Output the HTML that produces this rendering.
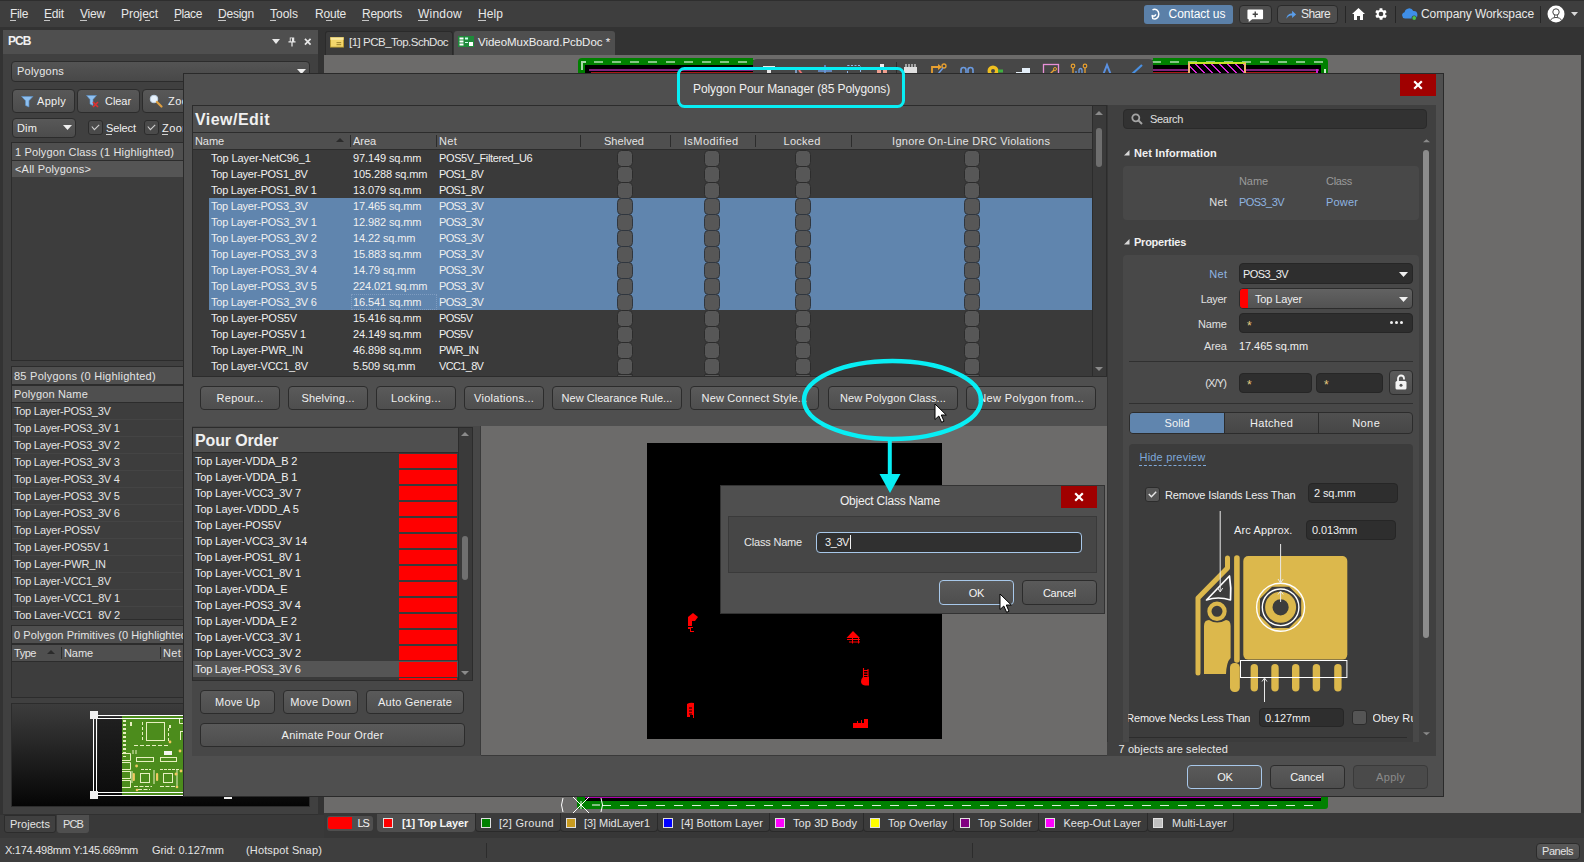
<!DOCTYPE html>
<html><head><meta charset="utf-8"><title>Polygon Pour Manager</title>
<style>
html,body{margin:0;padding:0;}
body{width:1584px;height:862px;overflow:hidden;background:#3e3e3e;font-family:"Liberation Sans",sans-serif;position:relative;}
.a{position:absolute;}
.t{white-space:pre;}
svg{position:absolute;overflow:visible;}
</style></head><body>
<div class="a" style="left:0px;top:0px;width:1584px;height:27px;background:#3e3e3e;"></div>
<div class="a" style="left:0px;top:0px;width:1584px;height:1px;background:#2e2e2e;"></div>
<div class="a" style="left:0px;top:27px;width:1584px;height:28px;background:#333333;"></div>
<div class="a" style="left:0px;top:55px;width:1584px;height:760px;background:#333333;"></div>
<div class="a t" style="left:10.0px;top:6.0px;font-size:12px;line-height:16px;color:#e8e8e8;letter-spacing:-0.34px;">File</div>
<div class="a t" style="left:44.0px;top:6.0px;font-size:12px;line-height:16px;color:#e8e8e8;letter-spacing:-0.17px;">Edit</div>
<div class="a t" style="left:80.0px;top:6.0px;font-size:12px;line-height:16px;color:#e8e8e8;letter-spacing:-0.20px;">View</div>
<div class="a t" style="left:121.0px;top:6.0px;font-size:12px;line-height:16px;color:#e8e8e8;letter-spacing:-0.05px;">Project</div>
<div class="a t" style="left:174.0px;top:6.0px;font-size:12px;line-height:16px;color:#e8e8e8;letter-spacing:-0.41px;">Place</div>
<div class="a t" style="left:218.0px;top:6.0px;font-size:12px;line-height:16px;color:#e8e8e8;letter-spacing:-0.23px;">Design</div>
<div class="a t" style="left:270.0px;top:6.0px;font-size:12px;line-height:16px;color:#e8e8e8;letter-spacing:-0.00px;">Tools</div>
<div class="a t" style="left:315.0px;top:6.0px;font-size:12px;line-height:16px;color:#e8e8e8;letter-spacing:-0.21px;">Route</div>
<div class="a t" style="left:362.0px;top:6.0px;font-size:12px;line-height:16px;color:#e8e8e8;letter-spacing:-0.29px;">Reports</div>
<div class="a t" style="left:418.0px;top:6.0px;font-size:12px;line-height:16px;color:#e8e8e8;letter-spacing:0.22px;">Window</div>
<div class="a t" style="left:478.0px;top:6.0px;font-size:12px;line-height:16px;color:#e8e8e8;letter-spacing:0.08px;">Help</div>
<div class="a" style="left:10px;top:20px;width:6px;height:1px;background:#c4c4c4;"></div>
<div class="a" style="left:44px;top:20px;width:6px;height:1px;background:#c4c4c4;"></div>
<div class="a" style="left:80px;top:20px;width:7px;height:1px;background:#c4c4c4;"></div>
<div class="a" style="left:145px;top:20px;width:5px;height:1px;background:#c4c4c4;"></div>
<div class="a" style="left:174px;top:20px;width:6px;height:1px;background:#c4c4c4;"></div>
<div class="a" style="left:218px;top:20px;width:8px;height:1px;background:#c4c4c4;"></div>
<div class="a" style="left:270px;top:20px;width:6px;height:1px;background:#c4c4c4;"></div>
<div class="a" style="left:326px;top:20px;width:6px;height:1px;background:#c4c4c4;"></div>
<div class="a" style="left:362px;top:20px;width:7px;height:1px;background:#c4c4c4;"></div>
<div class="a" style="left:418px;top:20px;width:10px;height:1px;background:#c4c4c4;"></div>
<div class="a" style="left:478px;top:20px;width:8px;height:1px;background:#c4c4c4;"></div>
<div class="a" style="left:1144px;top:5px;width:89px;height:19px;background:#5b80a8;border-radius:3px;"></div>
<svg style="left:1151px;top:8px" width="9" height="12" viewBox="0 0 9 12"><path d="M1.500 1.800 C4.500 0.200 7.800 2.200 7.800 6 C7.800 9.800 4.800 11.800 1.800 10.600 L1.200 7.600 C2.600 8.600 4.600 8 4.600 6.200" fill="none" stroke="#fff" stroke-width="1.500" stroke-linejoin="round"/></svg>
<div class="a t" style="left:1168.5px;top:6.0px;font-size:12px;line-height:16px;color:#fff;letter-spacing:-0.04px;">Contact us</div>
<div class="a" style="left:1238.5px;top:5px;width:33px;height:19px;background:#4e4e4e;border:1px solid #2a2a2a;box-sizing:border-box;border-radius:4px;"></div>
<svg style="left:1247px;top:8.500px" width="16.500" height="13.500" viewBox="0 0 19 14" preserveAspectRatio="none"><path d="M1.5 0.5 H17.5 Q18.5 0.5 18.5 1.5 V9.5 Q18.5 10.5 17.5 10.5 H6 L2 13.5 V10.5 H1.5 Q0.5 10.5 0.5 9.5 V1.5 Q0.5 0.5 1.5 0.5 Z" fill="#fff"/><path d="M9.5 2.5 V8.5 M6.5 5.5 H12.5" stroke="#444" stroke-width="1.6"/></svg>
<div class="a" style="left:1277px;top:5px;width:61px;height:19px;background:#4e4e4e;border:1px solid #2a2a2a;box-sizing:border-box;border-radius:4px;"></div>
<svg style="left:1285.500px;top:9.500px" width="10.500" height="9.500" viewBox="0 0 12 11" preserveAspectRatio="none"><path d="M0.5 10 C1 5.5 4 4 7 4 V1 L11.5 5.2 L7 9.2 V6.4 C4.5 6.4 2.5 7 0.5 10 Z" fill="#5a9eea"/></svg>
<div class="a t" style="left:1301.0px;top:6.0px;font-size:12px;line-height:16px;color:#e8e8e8;letter-spacing:-0.61px;">Share</div>
<div class="a" style="left:1345px;top:6px;width:1px;height:17px;background:#262626;"></div>
<svg style="left:1352px;top:8px" width="13" height="12" viewBox="0 0 13 12"><path d="M6.5 0 L13 6 H11 V12 H8 V8 H5 V12 H2 V6 H0 Z" fill="#fff"/></svg>
<svg style="left:1373px;top:6px" width="16" height="16" viewBox="0 0 24 24"><path fill="#fff" d="M19.4 13a7.5 7.5 0 0 0 0-2l2.1-1.6-2-3.5-2.5 1a7.5 7.5 0 0 0-1.7-1L15 3.3h-4l-.4 2.6a7.5 7.5 0 0 0-1.7 1l-2.5-1-2 3.5L6.600 11a7.500 7.500 0 0 0 0 2l-2.100 1.600 2 3.500 2.500-1a7.500 7.500 0 0 0 1.700 1l.4 2.600h4l.4-2.600a7.500 7.500 0 0 0 1.700-1l2.500 1 2-3.500L19.400 13zM13 15.500a3.500 3.500 0 1 1 0-7 3.500 3.500 0 0 1 0 7z" transform="translate(-1,0)"/></svg>
<div class="a" style="left:1395px;top:6px;width:1px;height:17px;background:#262626;"></div>
<svg style="left:1401px;top:7px" width="17" height="14" viewBox="0 0 17 14"><path d="M4 11.5 A3.2 3.2 0 0 1 3.6 5.2 A4.6 4.6 0 0 1 12.3 4 A3.6 3.6 0 0 1 13 11.5 Z" fill="#3f8fe8"/><circle cx="13.2" cy="11" r="2.6" fill="#3e3e3e"/><circle cx="13.2" cy="11" r="1.9" fill="#4cc04c"/></svg>
<div class="a t" style="left:1421.0px;top:6.0px;font-size:12px;line-height:16px;color:#e8e8e8;letter-spacing:-0.09px;">Company Workspace</div>
<div class="a" style="left:1540px;top:6px;width:1px;height:17px;background:#262626;"></div>
<svg style="left:1547px;top:5px" width="18" height="18" viewBox="0 0 18 18"><circle cx="9" cy="9" r="8.5" fill="#fff"/><circle cx="9" cy="7" r="3.2" fill="none" stroke="#444" stroke-width="1"/><path d="M3.5 15.5 C4.5 11.5 13.5 11.5 14.5 15.5" fill="none" stroke="#444" stroke-width="1"/><path d="M7.5 10 V12.5 M10.5 10 V12.5" stroke="#444" stroke-width=".8"/></svg>
<svg style="left:1571px;top:12px" width="7" height="4" viewBox="0 0 7 4"><path d="M0 0 H7 L3.5 4 Z" fill="#d8d8d8"/></svg>
<div class="a" style="left:325px;top:30.5px;width:128px;height:24px;background:#3b3b3b;border-radius:3px 3px 0 0;border:1px solid #2a2a2a;border-bottom:none;box-sizing:border-box;"></div>
<svg style="left:329.500px;top:36.500px" width="14" height="10.500" viewBox="0 0 15 13" preserveAspectRatio="none"><rect x="0.5" y="0.5" width="14" height="12" fill="#f3d66b" stroke="#b89a30"/><rect x="0.5" y="0.5" width="14" height="3" fill="#fbe9a0"/><path d="M7 7 H12 M7 9.500 H12" stroke="#8a7320" stroke-width="1"/></svg>
<div class="a t" style="left:349.0px;top:34.0px;font-size:11.5px;line-height:16px;color:#e4e4e4;letter-spacing:-0.50px;">[1] PCB_Top.SchDoc</div>
<div class="a" style="left:454px;top:30.5px;width:161px;height:24.5px;background:#4f4f4f;border-radius:3px 3px 0 0;"></div>
<svg style="left:458px;top:36px" width="16" height="11" viewBox="0 0 16 11"><rect width="16" height="11" fill="#1f8a3a"/><rect x="1.500" y="1.500" width="4" height="2" fill="#fff"/><rect x="1.500" y="4.500" width="4" height="2" fill="#fff"/><rect x="1.500" y="7.500" width="4" height="2" fill="#fff"/><rect x="7" y="1.500" width="3" height="2" fill="#cfe"/><rect x="11" y="6" width="4" height="4" fill="#fff"/><rect x="7" y="6" width="3" height="1" fill="#cfe"/></svg>
<div class="a t" style="left:478.0px;top:34.0px;font-size:11.5px;line-height:16px;color:#f0f0f0;letter-spacing:-0.03px;">VideoMuxBoard.PcbDoc *</div>
<div class="a" style="left:324px;top:54.5px;width:1257px;height:758.5px;background:#6c6b6a;"></div>
<div class="a" style="left:578px;top:58px;width:750px;height:20px;background:#008000;border-radius:4px;"></div>
<div class="a" style="left:585px;top:65px;width:736px;height:13px;background:#000;"></div>
<div class="a" style="left:594px;top:61px;width:9px;height:2px;background:#84c684;"></div>
<div class="a" style="left:612px;top:61px;width:9px;height:2px;background:#84c684;"></div>
<div class="a" style="left:630px;top:61px;width:9px;height:2px;background:#84c684;"></div>
<div class="a" style="left:648px;top:61px;width:9px;height:2px;background:#84c684;"></div>
<div class="a" style="left:666px;top:61px;width:9px;height:2px;background:#84c684;"></div>
<div class="a" style="left:684px;top:61px;width:9px;height:2px;background:#84c684;"></div>
<div class="a" style="left:702px;top:61px;width:9px;height:2px;background:#84c684;"></div>
<div class="a" style="left:720px;top:61px;width:9px;height:2px;background:#84c684;"></div>
<div class="a" style="left:738px;top:61px;width:9px;height:2px;background:#84c684;"></div>
<div class="a" style="left:756px;top:61px;width:9px;height:2px;background:#84c684;"></div>
<div class="a" style="left:774px;top:61px;width:9px;height:2px;background:#84c684;"></div>
<div class="a" style="left:792px;top:61px;width:9px;height:2px;background:#84c684;"></div>
<div class="a" style="left:810px;top:61px;width:9px;height:2px;background:#84c684;"></div>
<div class="a" style="left:828px;top:61px;width:9px;height:2px;background:#84c684;"></div>
<div class="a" style="left:846px;top:61px;width:9px;height:2px;background:#84c684;"></div>
<div class="a" style="left:864px;top:61px;width:9px;height:2px;background:#84c684;"></div>
<div class="a" style="left:882px;top:61px;width:9px;height:2px;background:#84c684;"></div>
<div class="a" style="left:900px;top:61px;width:9px;height:2px;background:#84c684;"></div>
<div class="a" style="left:918px;top:61px;width:9px;height:2px;background:#84c684;"></div>
<div class="a" style="left:936px;top:61px;width:9px;height:2px;background:#84c684;"></div>
<div class="a" style="left:954px;top:61px;width:9px;height:2px;background:#84c684;"></div>
<div class="a" style="left:972px;top:61px;width:9px;height:2px;background:#84c684;"></div>
<div class="a" style="left:990px;top:61px;width:9px;height:2px;background:#84c684;"></div>
<div class="a" style="left:1008px;top:61px;width:9px;height:2px;background:#84c684;"></div>
<div class="a" style="left:1026px;top:61px;width:9px;height:2px;background:#84c684;"></div>
<div class="a" style="left:1044px;top:61px;width:9px;height:2px;background:#84c684;"></div>
<div class="a" style="left:1062px;top:61px;width:9px;height:2px;background:#84c684;"></div>
<div class="a" style="left:1080px;top:61px;width:9px;height:2px;background:#84c684;"></div>
<div class="a" style="left:1098px;top:61px;width:9px;height:2px;background:#84c684;"></div>
<div class="a" style="left:1116px;top:61px;width:9px;height:2px;background:#84c684;"></div>
<div class="a" style="left:1134px;top:61px;width:9px;height:2px;background:#84c684;"></div>
<div class="a" style="left:1152px;top:61px;width:9px;height:2px;background:#84c684;"></div>
<div class="a" style="left:1170px;top:61px;width:9px;height:2px;background:#84c684;"></div>
<div class="a" style="left:1188px;top:61px;width:9px;height:2px;background:#84c684;"></div>
<div class="a" style="left:1206px;top:61px;width:9px;height:2px;background:#84c684;"></div>
<div class="a" style="left:1224px;top:61px;width:9px;height:2px;background:#84c684;"></div>
<div class="a" style="left:1242px;top:61px;width:9px;height:2px;background:#84c684;"></div>
<div class="a" style="left:1260px;top:61px;width:9px;height:2px;background:#84c684;"></div>
<div class="a" style="left:1278px;top:61px;width:9px;height:2px;background:#84c684;"></div>
<div class="a" style="left:1296px;top:61px;width:9px;height:2px;background:#84c684;"></div>
<div class="a" style="left:1314px;top:61px;width:9px;height:2px;background:#84c684;"></div>
<div class="a" style="left:589px;top:69px;width:730px;height:2px;background:#80207e;"></div>
<div class="a" style="left:591px;top:71.5px;width:727px;height:1.5px;background:#a81818;"></div>
<div class="a" style="left:1188px;top:62px;width:58px;height:12px;border-top:2px solid #c8e428;border-left:2px solid #f0b070;border-right:2px solid #f0b070;box-sizing:border-box;background:repeating-linear-gradient(45deg,#000 0 4.66px,#d828d8 4.66px 5.66px);"></div>
<div class="a" style="left:581px;top:61px;width:1.5px;height:9px;background:#a8d8a8;"></div>
<div class="a" style="left:581px;top:61px;width:4.5px;height:1.5px;background:#a8d8a8;"></div>
<div class="a" style="left:1324px;top:69px;width:1.5px;height:5px;background:#c8f0c8;"></div>
<div class="a" style="left:1316px;top:69px;width:1.5px;height:4px;background:#d020d0;"></div>
<div class="a" style="left:752.5px;top:57px;width:400px;height:3px;background:#6c6b6a;"></div>
<div class="a" style="left:752.5px;top:59.3px;width:400px;height:20px;background:#474747;border-radius:4px;"></div>
<div class="a" style="left:577px;top:790px;width:751px;height:19px;background:#008000;border-radius:3px;"></div>
<div class="a" style="left:585px;top:790px;width:736px;height:11px;background:#000;"></div>
<div class="a" style="left:585px;top:797px;width:736px;height:1px;background:#b000b0;"></div>
<div class="a" style="left:602px;top:805px;width:9px;height:1px;background:#d8f0d8;"></div>
<div class="a" style="left:620px;top:805px;width:9px;height:1px;background:#d8f0d8;"></div>
<div class="a" style="left:638px;top:805px;width:9px;height:1px;background:#d8f0d8;"></div>
<div class="a" style="left:656px;top:805px;width:9px;height:1px;background:#d8f0d8;"></div>
<div class="a" style="left:674px;top:805px;width:9px;height:1px;background:#d8f0d8;"></div>
<div class="a" style="left:692px;top:805px;width:9px;height:1px;background:#d8f0d8;"></div>
<div class="a" style="left:710px;top:805px;width:9px;height:1px;background:#d8f0d8;"></div>
<div class="a" style="left:728px;top:805px;width:9px;height:1px;background:#d8f0d8;"></div>
<div class="a" style="left:746px;top:805px;width:9px;height:1px;background:#d8f0d8;"></div>
<div class="a" style="left:764px;top:805px;width:9px;height:1px;background:#d8f0d8;"></div>
<div class="a" style="left:782px;top:805px;width:9px;height:1px;background:#d8f0d8;"></div>
<div class="a" style="left:800px;top:805px;width:9px;height:1px;background:#d8f0d8;"></div>
<div class="a" style="left:818px;top:805px;width:9px;height:1px;background:#d8f0d8;"></div>
<div class="a" style="left:836px;top:805px;width:9px;height:1px;background:#d8f0d8;"></div>
<div class="a" style="left:854px;top:805px;width:9px;height:1px;background:#d8f0d8;"></div>
<div class="a" style="left:872px;top:805px;width:9px;height:1px;background:#d8f0d8;"></div>
<div class="a" style="left:890px;top:805px;width:9px;height:1px;background:#d8f0d8;"></div>
<div class="a" style="left:908px;top:805px;width:9px;height:1px;background:#d8f0d8;"></div>
<div class="a" style="left:926px;top:805px;width:9px;height:1px;background:#d8f0d8;"></div>
<div class="a" style="left:944px;top:805px;width:9px;height:1px;background:#d8f0d8;"></div>
<div class="a" style="left:962px;top:805px;width:9px;height:1px;background:#d8f0d8;"></div>
<div class="a" style="left:980px;top:805px;width:9px;height:1px;background:#d8f0d8;"></div>
<div class="a" style="left:998px;top:805px;width:9px;height:1px;background:#d8f0d8;"></div>
<div class="a" style="left:1016px;top:805px;width:9px;height:1px;background:#d8f0d8;"></div>
<div class="a" style="left:1034px;top:805px;width:9px;height:1px;background:#d8f0d8;"></div>
<div class="a" style="left:1052px;top:805px;width:9px;height:1px;background:#d8f0d8;"></div>
<div class="a" style="left:1070px;top:805px;width:9px;height:1px;background:#d8f0d8;"></div>
<div class="a" style="left:1088px;top:805px;width:9px;height:1px;background:#d8f0d8;"></div>
<div class="a" style="left:1106px;top:805px;width:9px;height:1px;background:#d8f0d8;"></div>
<div class="a" style="left:1124px;top:805px;width:9px;height:1px;background:#d8f0d8;"></div>
<div class="a" style="left:1142px;top:805px;width:9px;height:1px;background:#d8f0d8;"></div>
<div class="a" style="left:1160px;top:805px;width:9px;height:1px;background:#d8f0d8;"></div>
<div class="a" style="left:1178px;top:805px;width:9px;height:1px;background:#d8f0d8;"></div>
<div class="a" style="left:1196px;top:805px;width:9px;height:1px;background:#d8f0d8;"></div>
<div class="a" style="left:1214px;top:805px;width:9px;height:1px;background:#d8f0d8;"></div>
<div class="a" style="left:1232px;top:805px;width:9px;height:1px;background:#d8f0d8;"></div>
<div class="a" style="left:1250px;top:805px;width:9px;height:1px;background:#d8f0d8;"></div>
<div class="a" style="left:1268px;top:805px;width:9px;height:1px;background:#d8f0d8;"></div>
<div class="a" style="left:1286px;top:805px;width:9px;height:1px;background:#d8f0d8;"></div>
<div class="a" style="left:1304px;top:805px;width:9px;height:1px;background:#d8f0d8;"></div>
<div class="a" style="left:324px;top:813px;width:1260px;height:25px;background:#373737;"></div>
<div class="a" style="left:0px;top:838px;width:1584px;height:24px;background:#3e3e3e;"></div>
<svg style="left:760px;top:61px" width="18" height="14" viewBox="0 0 18 14"><path d="M3 5 H15 V7 H11 V14 H7 V7 H3 Z" fill="#e8e8e8"/></svg>
<svg style="left:788px;top:61px" width="18" height="14" viewBox="0 0 18 14"><path d="M8 6 V14" stroke="#8fb8e8" stroke-width="1.500"/><path d="M11 9 L14 13" stroke="#e87070" stroke-width="2"/></svg>
<svg style="left:816px;top:61px" width="18" height="14" viewBox="0 0 18 14"><path d="M2 10 H16 M9 4 V14" stroke="#6a9ae0" stroke-width="1.500"/></svg>
<svg style="left:845px;top:61px" width="18" height="14" viewBox="0 0 18 14"><rect x="2.500" y="4.500" width="13" height="10" fill="none" stroke="#8fb8e8" stroke-dasharray="2 1.500"/></svg>
<svg style="left:873px;top:61px" width="18" height="14" viewBox="0 0 18 14"><rect x="4" y="6" width="4" height="8" fill="#f0a090"/><rect x="10" y="6" width="4" height="8" fill="#f0a090"/><rect x="7" y="3" width="4" height="5" fill="#eee"/></svg>
<div class="a" style="left:896px;top:62px;width:1px;height:12px;background:#2c2c2c;"></div>
<svg style="left:901px;top:61px" width="18" height="14" viewBox="0 0 18 14"><rect x="3" y="6" width="13" height="8" fill="#e0e0e0"/><path d="M5 3 V6 M8 3 V6 M11 3 V6 M14 3 V6" stroke="#e0e0e0" stroke-width="1.200"/></svg>
<svg style="left:929px;top:61px" width="18" height="14" viewBox="0 0 18 14"><path d="M3 14 V6 H11" fill="none" stroke="#e8a030" stroke-width="1.800"/><path d="M9 3 L13 6 L9 9 Z" fill="#e8a030"/><circle cx="15" cy="5" r="2" fill="none" stroke="#e8a030" stroke-width="1.300"/><path d="M9 13 L14 7" stroke="#6a9ae0" stroke-width="1.500"/></svg>
<svg style="left:958px;top:61px" width="18" height="14" viewBox="0 0 18 14"><path d="M3 14 V9 A2.500 2.500 0 0 1 8 9 V14 M10 14 V9 A2.500 2.500 0 0 1 15 9 V14" fill="none" stroke="#6a9ae0" stroke-width="1.600"/></svg>
<svg style="left:985px;top:61px" width="18" height="14" viewBox="0 0 18 14"><circle cx="8" cy="10" r="5.500" fill="#f0c020"/><circle cx="8" cy="10" r="2" fill="#474747"/><rect x="13" y="8.500" width="5" height="3" fill="#40b040"/></svg>
<svg style="left:1014px;top:61px" width="18" height="14" viewBox="0 0 18 14"><path d="M2 14 V11 H8 V7 H16 V14 Z" fill="#e4eef8"/></svg>
<svg style="left:1042px;top:61px" width="18" height="14" viewBox="0 0 18 14"><rect x="1.500" y="3.500" width="15" height="12" fill="none" stroke="#e890d8" stroke-width="1.300"/><path d="M8 13 L12 9" stroke="#e8a030" stroke-width="1.500"/><circle cx="13" cy="8" r="1.500" fill="none" stroke="#e8a030"/></svg>
<svg style="left:1070px;top:61px" width="18" height="14" viewBox="0 0 18 14"><circle cx="3" cy="5" r="1.800" fill="none" stroke="#e8a030" stroke-width="1.200"/><circle cx="15" cy="5" r="1.800" fill="none" stroke="#e8a030" stroke-width="1.200"/><path d="M3 7 V14 M15 7 V14" stroke="#e8a030" stroke-width="1.300"/><path d="M6 14 V10 M9 14 V9 A1.500 1.500 0 0 1 12 9 V14" fill="none" stroke="#6a9ae0" stroke-width="1.300"/></svg>
<svg style="left:1098px;top:61px" width="18" height="14" viewBox="0 0 18 14"><path d="M5 14 L9 4 L13 14" fill="none" stroke="#5a90e0" stroke-width="2"/></svg>
<svg style="left:1127px;top:61px" width="18" height="14" viewBox="0 0 18 14"><path d="M4 14 L15 4" stroke="#4a90e2" stroke-width="2.200"/></svg>
<div class="a" style="left:3px;top:30px;width:315px;height:24px;background:#4f4f4f;"></div>
<div class="a" style="left:3px;top:54px;width:315px;height:784px;background:#404040;"></div>
<div class="a t" style="left:8.0px;top:33.0px;font-size:12px;line-height:16px;color:#f0f0f0;letter-spacing:-1.00px;font-weight:bold;">PCB</div>
<svg style="left:272px;top:39px" width="8" height="5" viewBox="0 0 8 5"><path d="M0 0 H8 L4 5 Z" fill="#e8e8e8"/></svg>
<svg style="left:287.500px;top:37px" width="8" height="9.500" viewBox="0 0 9 11" preserveAspectRatio="none"><path d="M2 0.500 H7 V5 H8.500 V6.500 H5.200 V11 H3.800 V6.500 H0.500 V5 H2 Z" fill="#e8e8e8"/><rect x="3" y="1.500" width="1.500" height="3.500" fill="#4f4f4f"/></svg>
<svg style="left:304px;top:38px" width="7.500" height="7.500" viewBox="0 0 8 8"><path d="M1 1 L7 7 M7 1 L1 7" stroke="#e8e8e8" stroke-width="1.800"/></svg>
<div class="a" style="left:11px;top:61px;width:299px;height:21px;border:1px solid #2c2c2c;box-sizing:border-box;border-radius:4px;background:linear-gradient(#545454,#484848);"></div>
<div class="a t" style="left:17.0px;top:63.0px;font-size:11px;line-height:16px;color:#e8e8e8;letter-spacing:0.22px;">Polygons</div>
<svg style="left:297px;top:69px" width="9" height="5" viewBox="0 0 9 5"><path d="M0 0 H9 L4.500 5 Z" fill="#f0f0f0"/></svg>
<div class="a" style="left:11.5px;top:89px;width:63px;height:24px;border:1px solid #2c2c2c;box-sizing:border-box;border-radius:4px;background:linear-gradient(#585858,#4c4c4c);"></div>
<div class="a" style="left:76.5px;top:89px;width:63px;height:24px;border:1px solid #2c2c2c;box-sizing:border-box;border-radius:4px;background:linear-gradient(#585858,#4c4c4c);"></div>
<div class="a" style="left:141.5px;top:89px;width:63px;height:24px;border:1px solid #2c2c2c;box-sizing:border-box;border-radius:4px;background:linear-gradient(#585858,#4c4c4c);"></div>
<svg style="left:21px;top:95.500px" width="12.500" height="11.500" viewBox="0 0 11 11" preserveAspectRatio="none"><path d="M0.500 0.500 H10.500 L7 4.500 V10.500 L4 9 V4.500 Z" fill="#8ec0f0" stroke="#5a90c8" stroke-width=".6"/></svg>
<div class="a t" style="left:37.0px;top:93.0px;font-size:11px;line-height:16px;color:#f0f0f0;letter-spacing:0.29px;">Apply</div>
<svg style="left:86px;top:95px" width="14" height="13" viewBox="0 0 14 13"><path d="M0.500 0.500 H10.500 L7 4.500 V10.500 L4 9 V4.500 Z" fill="#8ec0f0" stroke="#5a90c8" stroke-width=".6"/><path d="M7 7 L12 12 M12 7 L7 12" stroke="#e03030" stroke-width="1.600"/></svg>
<div class="a t" style="left:105.0px;top:93.0px;font-size:11px;line-height:16px;color:#f0f0f0;letter-spacing:-0.06px;">Clear</div>
<svg style="left:149px;top:94px" width="14" height="14" viewBox="0 0 14 14"><circle cx="5" cy="5" r="3.800" fill="#e8f2fc" stroke="#bcd0e4" stroke-width="1"/><path d="M8 8 L12.500 12.500" stroke="#e0a040" stroke-width="2.200" stroke-linecap="round"/></svg>
<div class="a t" style="left:168.0px;top:93.0px;font-size:11px;line-height:16px;color:#f0f0f0;letter-spacing:0.47px;">Zoom</div>
<div class="a" style="left:11.5px;top:117.5px;width:64px;height:20px;border:1px solid #2c2c2c;box-sizing:border-box;border-radius:4px;background:linear-gradient(#585858,#4c4c4c);"></div>
<div class="a t" style="left:17.0px;top:120.0px;font-size:11px;line-height:16px;color:#f0f0f0;letter-spacing:0.15px;">Dim</div>
<svg style="left:63px;top:125px" width="9" height="5" viewBox="0 0 9 5"><path d="M0 0 H9 L4.500 5 Z" fill="#f0f0f0"/></svg>
<div class="a" style="left:87.5px;top:119.5px;width:15px;height:15px;background:#4a4a4a;border:1px solid #2c2c2c;box-sizing:border-box;border-radius:3px;"></div>
<svg style="left:91.0px;top:123.5px" width="9" height="7" viewBox="0 0 9 7"><path d="M0.800 2.500 L3.400 5.600 L8.200 0.800" fill="none" stroke="#d0d0d0" stroke-width="1.100"/></svg>
<div class="a t" style="left:106.0px;top:120.0px;font-size:11px;line-height:16px;color:#f0f0f0;letter-spacing:-0.10px;">Select</div>
<div class="a" style="left:106px;top:134px;width:6px;height:1px;background:#d0d0d0;"></div>
<div class="a" style="left:143.5px;top:119.5px;width:15px;height:15px;background:#4a4a4a;border:1px solid #2c2c2c;box-sizing:border-box;border-radius:3px;"></div>
<svg style="left:147.0px;top:123.5px" width="9" height="7" viewBox="0 0 9 7"><path d="M0.800 2.500 L3.400 5.600 L8.200 0.800" fill="none" stroke="#d0d0d0" stroke-width="1.100"/></svg>
<div class="a t" style="left:162.0px;top:120.0px;font-size:11px;line-height:16px;color:#f0f0f0;letter-spacing:0.47px;">Zoom</div>
<div class="a" style="left:162px;top:134px;width:6px;height:1px;background:#d0d0d0;"></div>
<div class="a" style="left:11px;top:142px;width:300px;height:219px;background:#3d3d3d;border:1px solid #2c2c2c;box-sizing:border-box;"></div>
<div class="a" style="left:12px;top:143px;width:298px;height:17px;background:#4f4f4f;"></div>
<div class="a" style="left:12px;top:160px;width:298px;height:1px;background:#2c2c2c;"></div>
<div class="a t" style="left:15.0px;top:144.0px;font-size:11px;line-height:16px;color:#e4e4e4;letter-spacing:0.16px;">1 Polygon Class (1 Highlighted)</div>
<div class="a" style="left:12px;top:161px;width:298px;height:16px;background:#555555;"></div>
<div class="a t" style="left:15.0px;top:161.0px;font-size:11px;line-height:16px;color:#e4e4e4;letter-spacing:0.19px;">&lt;All Polygons&gt;</div>
<div class="a" style="left:11px;top:366px;width:300px;height:254px;background:#3d3d3d;border:1px solid #2c2c2c;box-sizing:border-box;"></div>
<div class="a" style="left:12px;top:367px;width:298px;height:17px;background:#4f4f4f;"></div>
<div class="a" style="left:12px;top:384px;width:298px;height:2px;background:#2c2c2c;"></div>
<div class="a t" style="left:14.0px;top:368.0px;font-size:11px;line-height:16px;color:#e4e4e4;letter-spacing:0.25px;">85 Polygons (0 Highlighted)</div>
<div class="a" style="left:12px;top:386px;width:298px;height:16px;background:#4f4f4f;"></div>
<div class="a" style="left:12px;top:402px;width:298px;height:1px;background:#2c2c2c;"></div>
<div class="a t" style="left:14.0px;top:386.0px;font-size:11px;line-height:16px;color:#e4e4e4;letter-spacing:0.15px;">Polygon Name</div>
<div class="a" style="left:12px;top:419px;width:298px;height:1px;background:#444444;"></div>
<div class="a t" style="left:14.0px;top:403.0px;font-size:11px;line-height:16px;color:#e4e4e4;letter-spacing:-0.25px;">Top Layer-POS3_3V</div>
<div class="a" style="left:12px;top:436px;width:298px;height:1px;background:#444444;"></div>
<div class="a t" style="left:14.0px;top:420.0px;font-size:11px;line-height:16px;color:#e4e4e4;letter-spacing:-0.23px;">Top Layer-POS3_3V 1</div>
<div class="a" style="left:12px;top:453px;width:298px;height:1px;background:#444444;"></div>
<div class="a t" style="left:14.0px;top:437.0px;font-size:11px;line-height:16px;color:#e4e4e4;letter-spacing:-0.23px;">Top Layer-POS3_3V 2</div>
<div class="a" style="left:12px;top:470px;width:298px;height:1px;background:#444444;"></div>
<div class="a t" style="left:14.0px;top:454.0px;font-size:11px;line-height:16px;color:#e4e4e4;letter-spacing:-0.23px;">Top Layer-POS3_3V 3</div>
<div class="a" style="left:12px;top:487px;width:298px;height:1px;background:#444444;"></div>
<div class="a t" style="left:14.0px;top:471.0px;font-size:11px;line-height:16px;color:#e4e4e4;letter-spacing:-0.23px;">Top Layer-POS3_3V 4</div>
<div class="a" style="left:12px;top:504px;width:298px;height:1px;background:#444444;"></div>
<div class="a t" style="left:14.0px;top:488.0px;font-size:11px;line-height:16px;color:#e4e4e4;letter-spacing:-0.23px;">Top Layer-POS3_3V 5</div>
<div class="a" style="left:12px;top:521px;width:298px;height:1px;background:#444444;"></div>
<div class="a t" style="left:14.0px;top:505.0px;font-size:11px;line-height:16px;color:#e4e4e4;letter-spacing:-0.23px;">Top Layer-POS3_3V 6</div>
<div class="a" style="left:12px;top:538px;width:298px;height:1px;background:#444444;"></div>
<div class="a t" style="left:14.0px;top:522.0px;font-size:11px;line-height:16px;color:#e4e4e4;letter-spacing:-0.18px;">Top Layer-POS5V</div>
<div class="a" style="left:12px;top:555px;width:298px;height:1px;background:#444444;"></div>
<div class="a t" style="left:14.0px;top:539.0px;font-size:11px;line-height:16px;color:#e4e4e4;letter-spacing:-0.17px;">Top Layer-POS5V 1</div>
<div class="a" style="left:12px;top:572px;width:298px;height:1px;background:#444444;"></div>
<div class="a t" style="left:14.0px;top:556.0px;font-size:11px;line-height:16px;color:#e4e4e4;letter-spacing:-0.19px;">Top Layer-PWR_IN</div>
<div class="a" style="left:12px;top:589px;width:298px;height:1px;background:#444444;"></div>
<div class="a t" style="left:14.0px;top:573.0px;font-size:11px;line-height:16px;color:#e4e4e4;letter-spacing:-0.24px;">Top Layer-VCC1_8V</div>
<div class="a" style="left:12px;top:606px;width:298px;height:1px;background:#444444;"></div>
<div class="a t" style="left:14.0px;top:590.0px;font-size:11px;line-height:16px;color:#e4e4e4;letter-spacing:-0.22px;">Top Layer-VCC1_8V 1</div>
<div class="a t" style="left:14.0px;top:607.0px;font-size:11px;line-height:16px;color:#e4e4e4;letter-spacing:-0.22px;clip-path:inset(0 0 4px 0);">Top Layer-VCC1_8V 2</div>
<div class="a" style="left:11px;top:625px;width:300px;height:73px;background:#3d3d3d;border:1px solid #2c2c2c;box-sizing:border-box;"></div>
<div class="a" style="left:12px;top:626px;width:298px;height:17px;background:#4f4f4f;"></div>
<div class="a" style="left:12px;top:643px;width:298px;height:2px;background:#2c2c2c;"></div>
<div class="a t" style="left:14.0px;top:627.0px;font-size:11px;line-height:16px;color:#e4e4e4;letter-spacing:0.07px;">0 Polygon Primitives (0 Highlighted)</div>
<div class="a" style="left:12px;top:645px;width:298px;height:16px;background:#4f4f4f;"></div>
<div class="a" style="left:12px;top:661px;width:298px;height:1px;background:#2c2c2c;"></div>
<div class="a t" style="left:14.0px;top:645.0px;font-size:11px;line-height:16px;color:#e4e4e4;letter-spacing:-0.46px;">Type</div>
<div class="a t" style="left:64.0px;top:645.0px;font-size:11px;line-height:16px;color:#e4e4e4;letter-spacing:-0.09px;">Name</div>
<div class="a t" style="left:163.0px;top:645.0px;font-size:11px;line-height:16px;color:#e4e4e4;letter-spacing:0.29px;">Net</div>
<svg style="left:47px;top:650px" width="8" height="4" viewBox="0 0 8 4"><path d="M0 4 H8 L4 0 Z" fill="#2b2b2b"/></svg>
<div class="a" style="left:61px;top:647px;width:1px;height:12px;background:#2c2c2c;"></div>
<div class="a" style="left:160px;top:647px;width:1px;height:12px;background:#2c2c2c;"></div>
<div class="a" style="left:11px;top:703px;width:299px;height:104px;border:1px solid #2c2c2c;box-sizing:border-box;background:linear-gradient(#3c3c3c,#050505);"></div>
<div class="a" style="left:98px;top:717px;width:25px;height:78px;background:linear-gradient(#202020,#0c0c0c);"></div>
<svg style="left:122px;top:716px" width="62" height="80" viewBox="122 716 62 80">
<rect x="122" y="716" width="62" height="80" fill="#4c8c1c"/>
<g fill="none" stroke="#e8f0c0" stroke-width="1">
<rect x="146.500" y="722.500" width="18" height="18"/>
<rect x="136.500" y="757.500" width="17" height="4"/><rect x="160.500" y="757.500" width="16" height="4"/>
<rect x="140.500" y="773.500" width="9" height="9"/><rect x="163.500" y="773.500" width="9" height="9"/>
<path d="M122 753.500 H130.500 V760.500 H122 M122 762.500 H130.500 V769.500 H122 M122 771.500 H130.500 V778.500 H122 M122 780.500 H130.500 V787.500 H122"/>
<path d="M134 745.500 H169" stroke-dasharray="4 2"/>
<path d="M142.500 722 V741 M168.500 728 V742" stroke-dasharray="3 2"/>
<path d="M141 769.500 H151 M160 769.500 H179" stroke-dasharray="3 1"/>
<path d="M134 786.500 H152 M160 786.500 H176 M138 789.500 H150" stroke-dasharray="4 1.500"/>
<path d="M179.500 718.500 H184 M179.500 718.500 V723.500 H184 M180.500 731 V740 M184 731.500 H180.500 M133 750 V754 M136 750 V754" />
<path d="M124.500 720 V757" stroke-width="3" stroke-dasharray="2 2"/>
<path d="M154 770 V784 M177 770 V788 M132 771 V783"/>
</g>
<rect x="164" y="751" width="8" height="4" fill="#f4f4f0"/>
<rect x="130" y="722" width="2" height="4" fill="#e8f0c0"/><rect x="169" y="725" width="2" height="3" fill="#e8f0c0"/>
<g fill="#f0c860"><circle cx="136.600" cy="766" r="1.400"/><rect x="132.700" y="773" width="2.200" height="8" rx="1"/><rect x="156" y="773" width="2.200" height="8" rx="1"/><circle cx="176" cy="774" r="1.500"/><circle cx="170" cy="742" r="1.400"/><circle cx="180" cy="751" r="1.400"/><circle cx="181" cy="771" r="1.400"/><circle cx="137" cy="790" r="1.300"/><circle cx="177" cy="787" r="1.300"/></g>
</svg>
<div class="a" style="left:93px;top:715px;width:92px;height:81px;border:1px solid #fff;box-sizing:border-box;"></div>
<div class="a" style="left:96px;top:718px;width:92px;height:75px;border:1px solid #fff;border-right:none;box-sizing:border-box;"></div>
<div class="a" style="left:90px;top:711px;width:8px;height:8px;background:#f0f0f0;"></div>
<div class="a" style="left:90px;top:791px;width:8px;height:8px;background:#f0f0f0;"></div>
<div class="a" style="left:224px;top:797px;width:8px;height:2px;background:#f0f0f0;"></div>
<div class="a" style="left:0px;top:814.5px;width:324px;height:23.5px;background:#393939;"></div>
<div class="a" style="left:3px;top:814px;width:315px;height:1px;background:#303030;"></div>
<div class="a" style="left:4px;top:815px;width:52px;height:18px;background:#404040;border:1px solid #2c2c2c;box-sizing:border-box;border-radius:0 0 3px 3px;"></div>
<div class="a t" style="left:10.0px;top:816.0px;font-size:11px;line-height:16px;color:#e4e4e4;letter-spacing:0.03px;">Projects</div>
<div class="a" style="left:57px;top:815px;width:32px;height:18px;background:#4f4f4f;border-radius:0 0 3px 3px;"></div>
<div class="a t" style="left:63.0px;top:816.0px;font-size:11px;line-height:16px;color:#e4e4e4;letter-spacing:-0.88px;">PCB</div>
<div class="a t" style="left:5.0px;top:842.0px;font-size:11px;line-height:16px;color:#e4e4e4;letter-spacing:-0.27px;">X:174.498mm Y:145.669mm</div>
<div class="a t" style="left:152.0px;top:842.0px;font-size:11px;line-height:16px;color:#e4e4e4;letter-spacing:-0.06px;">Grid: 0.127mm</div>
<div class="a t" style="left:246.0px;top:842.0px;font-size:11px;line-height:16px;color:#e4e4e4;letter-spacing:0.14px;">(Hotspot Snap)</div>
<div class="a" style="left:486px;top:843px;width:1px;height:15px;background:#2c2c2c;"></div>
<div class="a" style="left:972px;top:843px;width:1px;height:15px;background:#2c2c2c;"></div>
<div class="a" style="left:1536px;top:843px;width:44px;height:17px;border:1px solid #2c2c2c;box-sizing:border-box;border-radius:4px;background:linear-gradient(#585858,#4c4c4c);"></div>
<div class="a t" style="left:1542.0px;top:843.0px;font-size:11px;line-height:16px;color:#e4e4e4;letter-spacing:-0.44px;">Panels</div>
<div class="a" style="left:327px;top:815.5px;width:46px;height:15px;background:#4f4f4f;border-radius:3px;"></div>
<div class="a" style="left:327.5px;top:816.5px;width:24.5px;height:12.5px;background:#ff0000;border-radius:2px 0 0 2px;"></div>
<div class="a t" style="left:357.5px;top:815.0px;font-size:11px;line-height:16px;color:#f4f4f4;letter-spacing:-1.00px;">LS</div>
<div class="a" style="left:376.5px;top:813.5px;width:98px;height:18px;background:#4f4f4f;border-radius:0 0 4px 4px;"></div>
<div class="a" style="left:383px;top:818px;width:10px;height:10px;background:#ff0000;border:1px solid #e0e0e0;box-sizing:border-box;"></div>
<div class="a t" style="left:402.0px;top:815.0px;font-size:11px;line-height:16px;color:#f4f4f4;letter-spacing:-0.17px;font-weight:bold;">[1] Top Layer</div>
<div class="a" style="left:474.5px;top:813px;width:86.20000000000005px;height:18.5px;background:#3b3b3b;border:1px solid #2a2a2a;box-sizing:border-box;border-top:none;border-radius:0 0 4px 4px;"></div>
<div class="a" style="left:481px;top:818px;width:10px;height:10px;background:#008000;border:1px solid #e0e0e0;box-sizing:border-box;"></div>
<div class="a t" style="left:499.0px;top:815.0px;font-size:11px;line-height:16px;color:#e4e4e4;letter-spacing:0.30px;">[2] Ground</div>
<div class="a" style="left:559.7px;top:813px;width:97.89999999999998px;height:18.5px;background:#3b3b3b;border:1px solid #2a2a2a;box-sizing:border-box;border-top:none;border-radius:0 0 4px 4px;"></div>
<div class="a" style="left:566px;top:818px;width:10px;height:10px;background:#c89b20;border:1px solid #e0e0e0;box-sizing:border-box;"></div>
<div class="a t" style="left:584.0px;top:815.0px;font-size:11px;line-height:16px;color:#e4e4e4;letter-spacing:-0.05px;">[3] MidLayer1</div>
<div class="a" style="left:656.6px;top:813px;width:113.10000000000002px;height:18.5px;background:#3b3b3b;border:1px solid #2a2a2a;box-sizing:border-box;border-top:none;border-radius:0 0 4px 4px;"></div>
<div class="a" style="left:663px;top:818px;width:10px;height:10px;background:#0000ff;border:1px solid #e0e0e0;box-sizing:border-box;"></div>
<div class="a t" style="left:681.0px;top:815.0px;font-size:11px;line-height:16px;color:#e4e4e4;letter-spacing:0.08px;">[4] Bottom Layer</div>
<div class="a" style="left:768.7px;top:813px;width:95.29999999999995px;height:18.5px;background:#3b3b3b;border:1px solid #2a2a2a;box-sizing:border-box;border-top:none;border-radius:0 0 4px 4px;"></div>
<div class="a" style="left:775px;top:818px;width:10px;height:10px;background:#ff00ff;border:1px solid #e0e0e0;box-sizing:border-box;"></div>
<div class="a t" style="left:793.0px;top:815.0px;font-size:11px;line-height:16px;color:#e4e4e4;letter-spacing:0.09px;">Top 3D Body</div>
<div class="a" style="left:863px;top:813px;width:91px;height:18.5px;background:#3b3b3b;border:1px solid #2a2a2a;box-sizing:border-box;border-top:none;border-radius:0 0 4px 4px;"></div>
<div class="a" style="left:870px;top:818px;width:10px;height:10px;background:#ffff00;border:1px solid #e0e0e0;box-sizing:border-box;"></div>
<div class="a t" style="left:888.0px;top:815.0px;font-size:11px;line-height:16px;color:#e4e4e4;letter-spacing:0.03px;">Top Overlay</div>
<div class="a" style="left:953px;top:813px;width:86px;height:18.5px;background:#3b3b3b;border:1px solid #2a2a2a;box-sizing:border-box;border-top:none;border-radius:0 0 4px 4px;"></div>
<div class="a" style="left:960px;top:818px;width:10px;height:10px;background:#800080;border:1px solid #e0e0e0;box-sizing:border-box;"></div>
<div class="a t" style="left:978.0px;top:815.0px;font-size:11px;line-height:16px;color:#e4e4e4;letter-spacing:0.14px;">Top Solder</div>
<div class="a" style="left:1038px;top:813px;width:110px;height:18.5px;background:#3b3b3b;border:1px solid #2a2a2a;box-sizing:border-box;border-top:none;border-radius:0 0 4px 4px;"></div>
<div class="a" style="left:1045px;top:818px;width:10px;height:10px;background:#ff00ff;border:1px solid #e0e0e0;box-sizing:border-box;"></div>
<div class="a t" style="left:1063.5px;top:815.0px;font-size:11px;line-height:16px;color:#e4e4e4;letter-spacing:-0.01px;">Keep-Out Layer</div>
<div class="a" style="left:1147px;top:813px;width:87px;height:18.5px;background:#3b3b3b;border:1px solid #2a2a2a;box-sizing:border-box;border-top:none;border-radius:0 0 4px 4px;"></div>
<div class="a" style="left:1153px;top:818px;width:10px;height:10px;background:#c0c0c0;border:1px solid #e0e0e0;box-sizing:border-box;"></div>
<div class="a t" style="left:1172.0px;top:815.0px;font-size:11px;line-height:16px;color:#e4e4e4;letter-spacing:0.05px;">Multi-Layer</div>
<svg style="left:560px;top:797px" width="44" height="16" viewBox="0 0 44 16"><path d="M3 1 Q0 8 3 15 M41 1 Q44 8 41 15" fill="none" stroke="#fff" stroke-width="1"/><path d="M13 0 L29 16 M29 0 L13 16 M21 4 V12 M32 8 H40" stroke="#fff" stroke-width="1"/></svg>
<div class="a" style="left:183px;top:73px;width:1261px;height:724px;background:#4f4f4f;border:1px solid #2a2a2a;box-sizing:border-box;"></div>
<div class="a t" style="left:693.0px;top:81.0px;font-size:12px;line-height:16px;color:#f0f0f0;letter-spacing:-0.09px;">Polygon Pour Manager (85 Polygons)</div>
<div class="a" style="left:1400px;top:74px;width:36px;height:22px;background:#a00000;"></div>
<svg style="left:1413px;top:80px" width="10" height="10" viewBox="0 0 10 10"><path d="M1.200 1.200 L8.800 8.800 M8.800 1.200 L1.200 8.800" stroke="#fff" stroke-width="2.200"/></svg>
<div class="a" style="left:192px;top:105px;width:915px;height:272px;background:#3a3a3a;border:1px solid #2c2c2c;box-sizing:border-box;"></div>
<div class="a" style="left:193px;top:106px;width:899px;height:26px;background:#4f4f4f;"></div>
<div class="a t" style="left:195.0px;top:112.0px;font-size:16px;line-height:16px;color:#f0f0f0;letter-spacing:0.46px;font-weight:bold;">View/Edit</div>
<div class="a" style="left:193px;top:132px;width:900px;height:1px;background:#2c2c2c;"></div>
<div class="a" style="left:1092px;top:106px;width:1px;height:270px;background:#2c2c2c;"></div>
<div class="a" style="left:193px;top:133px;width:899px;height:16px;background:#4f4f4f;"></div>
<div class="a" style="left:193px;top:149px;width:900px;height:1px;background:#2c2c2c;"></div>
<div class="a t" style="left:195.0px;top:133.0px;font-size:11px;line-height:16px;color:#e4e4e4;letter-spacing:-0.09px;">Name</div>
<div class="a t" style="left:353.0px;top:133.0px;font-size:11px;line-height:16px;color:#e4e4e4;letter-spacing:-0.06px;">Area</div>
<div class="a t" style="left:439.0px;top:133.0px;font-size:11px;line-height:16px;color:#e4e4e4;letter-spacing:0.29px;">Net</div>
<div class="a t" style="left:604.0px;top:133.0px;font-size:11px;line-height:16px;color:#e4e4e4;letter-spacing:0.03px;">Shelved</div>
<div class="a t" style="left:683.7px;top:133.0px;font-size:11px;line-height:16px;color:#e4e4e4;letter-spacing:0.49px;">IsModified</div>
<div class="a t" style="left:783.6px;top:133.0px;font-size:11px;line-height:16px;color:#e4e4e4;letter-spacing:0.25px;">Locked</div>
<div class="a t" style="left:892.1px;top:133.0px;font-size:11px;line-height:16px;color:#e4e4e4;letter-spacing:0.25px;">Ignore On-Line DRC Violations</div>
<svg style="left:336px;top:138px" width="8" height="4" viewBox="0 0 8 4"><path d="M0 4 H8 L4 0 Z" fill="#2b2b2b"/></svg>
<div class="a" style="left:350px;top:135px;width:1px;height:12px;background:#2c2c2c;"></div>
<div class="a" style="left:436px;top:135px;width:1px;height:12px;background:#2c2c2c;"></div>
<div class="a" style="left:580px;top:135px;width:1px;height:12px;background:#2c2c2c;"></div>
<div class="a" style="left:670px;top:135px;width:1px;height:12px;background:#2c2c2c;"></div>
<div class="a" style="left:755px;top:135px;width:1px;height:12px;background:#2c2c2c;"></div>
<div class="a" style="left:851px;top:135px;width:1px;height:12px;background:#2c2c2c;"></div>
<div class="a" style="left:209px;top:198px;width:883px;height:112px;background:#6085ae;"></div>
<div class="a t" style="left:211.0px;top:150.0px;font-size:11px;line-height:16px;color:#f0f0f0;letter-spacing:-0.09px;">Top Layer-NetC96_1</div>
<div class="a t" style="left:353.0px;top:150.0px;font-size:11px;line-height:16px;color:#f0f0f0;letter-spacing:-0.11px;">97.149 sq.mm</div>
<div class="a t" style="left:439.0px;top:150.0px;font-size:11px;line-height:16px;color:#f0f0f0;letter-spacing:-0.38px;">POS5V_Filtered_U6</div>
<div class="a" style="left:617px;top:150px;width:15.5px;height:16.5px;background:#575757;border:1px solid #2c2c2c;box-sizing:border-box;border-radius:4.5px;"></div>
<div class="a" style="left:704.3px;top:150px;width:15.5px;height:16.5px;background:#575757;border:1px solid #2c2c2c;box-sizing:border-box;border-radius:4.5px;"></div>
<div class="a" style="left:795.3px;top:150px;width:15.5px;height:16.5px;background:#575757;border:1px solid #2c2c2c;box-sizing:border-box;border-radius:4.5px;"></div>
<div class="a" style="left:964.3px;top:150px;width:15.5px;height:16.5px;background:#575757;border:1px solid #2c2c2c;box-sizing:border-box;border-radius:4.5px;"></div>
<div class="a t" style="left:211.0px;top:166.0px;font-size:11px;line-height:16px;color:#f0f0f0;letter-spacing:-0.25px;">Top Layer-POS1_8V</div>
<div class="a t" style="left:353.0px;top:166.0px;font-size:11px;line-height:16px;color:#f0f0f0;letter-spacing:-0.11px;">105.288 sq.mm</div>
<div class="a t" style="left:439.0px;top:166.0px;font-size:11px;line-height:16px;color:#f0f0f0;letter-spacing:-0.68px;">POS1_8V</div>
<div class="a" style="left:617px;top:166px;width:15.5px;height:16.5px;background:#575757;border:1px solid #2c2c2c;box-sizing:border-box;border-radius:4.5px;"></div>
<div class="a" style="left:704.3px;top:166px;width:15.5px;height:16.5px;background:#575757;border:1px solid #2c2c2c;box-sizing:border-box;border-radius:4.5px;"></div>
<div class="a" style="left:795.3px;top:166px;width:15.5px;height:16.5px;background:#575757;border:1px solid #2c2c2c;box-sizing:border-box;border-radius:4.5px;"></div>
<div class="a" style="left:964.3px;top:166px;width:15.5px;height:16.5px;background:#575757;border:1px solid #2c2c2c;box-sizing:border-box;border-radius:4.5px;"></div>
<div class="a t" style="left:211.0px;top:182.0px;font-size:11px;line-height:16px;color:#f0f0f0;letter-spacing:-0.23px;">Top Layer-POS1_8V 1</div>
<div class="a t" style="left:353.0px;top:182.0px;font-size:11px;line-height:16px;color:#f0f0f0;letter-spacing:-0.11px;">13.079 sq.mm</div>
<div class="a t" style="left:439.0px;top:182.0px;font-size:11px;line-height:16px;color:#f0f0f0;letter-spacing:-0.68px;">POS1_8V</div>
<div class="a" style="left:617px;top:182px;width:15.5px;height:16.5px;background:#575757;border:1px solid #2c2c2c;box-sizing:border-box;border-radius:4.5px;"></div>
<div class="a" style="left:704.3px;top:182px;width:15.5px;height:16.5px;background:#575757;border:1px solid #2c2c2c;box-sizing:border-box;border-radius:4.5px;"></div>
<div class="a" style="left:795.3px;top:182px;width:15.5px;height:16.5px;background:#575757;border:1px solid #2c2c2c;box-sizing:border-box;border-radius:4.5px;"></div>
<div class="a" style="left:964.3px;top:182px;width:15.5px;height:16.5px;background:#575757;border:1px solid #2c2c2c;box-sizing:border-box;border-radius:4.5px;"></div>
<div class="a t" style="left:211.0px;top:198.0px;font-size:11px;line-height:16px;color:#f0f0f0;letter-spacing:-0.25px;">Top Layer-POS3_3V</div>
<div class="a t" style="left:353.0px;top:198.0px;font-size:11px;line-height:16px;color:#f0f0f0;letter-spacing:-0.11px;">17.465 sq.mm</div>
<div class="a t" style="left:439.0px;top:198.0px;font-size:11px;line-height:16px;color:#f0f0f0;letter-spacing:-0.68px;">POS3_3V</div>
<div class="a" style="left:617px;top:198px;width:15.5px;height:16.5px;background:#575757;border:1px solid #30363e;box-sizing:border-box;border-radius:4.5px;"></div>
<div class="a" style="left:704.3px;top:198px;width:15.5px;height:16.5px;background:#575757;border:1px solid #30363e;box-sizing:border-box;border-radius:4.5px;"></div>
<div class="a" style="left:795.3px;top:198px;width:15.5px;height:16.5px;background:#575757;border:1px solid #30363e;box-sizing:border-box;border-radius:4.5px;"></div>
<div class="a" style="left:964.3px;top:198px;width:15.5px;height:16.5px;background:#575757;border:1px solid #30363e;box-sizing:border-box;border-radius:4.5px;"></div>
<div class="a t" style="left:211.0px;top:214.0px;font-size:11px;line-height:16px;color:#f0f0f0;letter-spacing:-0.23px;">Top Layer-POS3_3V 1</div>
<div class="a t" style="left:353.0px;top:214.0px;font-size:11px;line-height:16px;color:#f0f0f0;letter-spacing:-0.11px;">12.982 sq.mm</div>
<div class="a t" style="left:439.0px;top:214.0px;font-size:11px;line-height:16px;color:#f0f0f0;letter-spacing:-0.68px;">POS3_3V</div>
<div class="a" style="left:617px;top:214px;width:15.5px;height:16.5px;background:#575757;border:1px solid #30363e;box-sizing:border-box;border-radius:4.5px;"></div>
<div class="a" style="left:704.3px;top:214px;width:15.5px;height:16.5px;background:#575757;border:1px solid #30363e;box-sizing:border-box;border-radius:4.5px;"></div>
<div class="a" style="left:795.3px;top:214px;width:15.5px;height:16.5px;background:#575757;border:1px solid #30363e;box-sizing:border-box;border-radius:4.5px;"></div>
<div class="a" style="left:964.3px;top:214px;width:15.5px;height:16.5px;background:#575757;border:1px solid #30363e;box-sizing:border-box;border-radius:4.5px;"></div>
<div class="a t" style="left:211.0px;top:230.0px;font-size:11px;line-height:16px;color:#f0f0f0;letter-spacing:-0.23px;">Top Layer-POS3_3V 2</div>
<div class="a t" style="left:353.0px;top:230.0px;font-size:11px;line-height:16px;color:#f0f0f0;letter-spacing:-0.11px;">14.22 sq.mm</div>
<div class="a t" style="left:439.0px;top:230.0px;font-size:11px;line-height:16px;color:#f0f0f0;letter-spacing:-0.68px;">POS3_3V</div>
<div class="a" style="left:617px;top:230px;width:15.5px;height:16.5px;background:#575757;border:1px solid #30363e;box-sizing:border-box;border-radius:4.5px;"></div>
<div class="a" style="left:704.3px;top:230px;width:15.5px;height:16.5px;background:#575757;border:1px solid #30363e;box-sizing:border-box;border-radius:4.5px;"></div>
<div class="a" style="left:795.3px;top:230px;width:15.5px;height:16.5px;background:#575757;border:1px solid #30363e;box-sizing:border-box;border-radius:4.5px;"></div>
<div class="a" style="left:964.3px;top:230px;width:15.5px;height:16.5px;background:#575757;border:1px solid #30363e;box-sizing:border-box;border-radius:4.5px;"></div>
<div class="a t" style="left:211.0px;top:246.0px;font-size:11px;line-height:16px;color:#f0f0f0;letter-spacing:-0.23px;">Top Layer-POS3_3V 3</div>
<div class="a t" style="left:353.0px;top:246.0px;font-size:11px;line-height:16px;color:#f0f0f0;letter-spacing:-0.11px;">15.883 sq.mm</div>
<div class="a t" style="left:439.0px;top:246.0px;font-size:11px;line-height:16px;color:#f0f0f0;letter-spacing:-0.68px;">POS3_3V</div>
<div class="a" style="left:617px;top:246px;width:15.5px;height:16.5px;background:#575757;border:1px solid #30363e;box-sizing:border-box;border-radius:4.5px;"></div>
<div class="a" style="left:704.3px;top:246px;width:15.5px;height:16.5px;background:#575757;border:1px solid #30363e;box-sizing:border-box;border-radius:4.5px;"></div>
<div class="a" style="left:795.3px;top:246px;width:15.5px;height:16.5px;background:#575757;border:1px solid #30363e;box-sizing:border-box;border-radius:4.5px;"></div>
<div class="a" style="left:964.3px;top:246px;width:15.5px;height:16.5px;background:#575757;border:1px solid #30363e;box-sizing:border-box;border-radius:4.5px;"></div>
<div class="a t" style="left:211.0px;top:262.0px;font-size:11px;line-height:16px;color:#f0f0f0;letter-spacing:-0.23px;">Top Layer-POS3_3V 4</div>
<div class="a t" style="left:353.0px;top:262.0px;font-size:11px;line-height:16px;color:#f0f0f0;letter-spacing:-0.11px;">14.79 sq.mm</div>
<div class="a t" style="left:439.0px;top:262.0px;font-size:11px;line-height:16px;color:#f0f0f0;letter-spacing:-0.68px;">POS3_3V</div>
<div class="a" style="left:617px;top:262px;width:15.5px;height:16.5px;background:#575757;border:1px solid #30363e;box-sizing:border-box;border-radius:4.5px;"></div>
<div class="a" style="left:704.3px;top:262px;width:15.5px;height:16.5px;background:#575757;border:1px solid #30363e;box-sizing:border-box;border-radius:4.5px;"></div>
<div class="a" style="left:795.3px;top:262px;width:15.5px;height:16.5px;background:#575757;border:1px solid #30363e;box-sizing:border-box;border-radius:4.5px;"></div>
<div class="a" style="left:964.3px;top:262px;width:15.5px;height:16.5px;background:#575757;border:1px solid #30363e;box-sizing:border-box;border-radius:4.5px;"></div>
<div class="a t" style="left:211.0px;top:278.0px;font-size:11px;line-height:16px;color:#f0f0f0;letter-spacing:-0.23px;">Top Layer-POS3_3V 5</div>
<div class="a t" style="left:353.0px;top:278.0px;font-size:11px;line-height:16px;color:#f0f0f0;letter-spacing:-0.11px;">224.021 sq.mm</div>
<div class="a t" style="left:439.0px;top:278.0px;font-size:11px;line-height:16px;color:#f0f0f0;letter-spacing:-0.68px;">POS3_3V</div>
<div class="a" style="left:617px;top:278px;width:15.5px;height:16.5px;background:#575757;border:1px solid #30363e;box-sizing:border-box;border-radius:4.5px;"></div>
<div class="a" style="left:704.3px;top:278px;width:15.5px;height:16.5px;background:#575757;border:1px solid #30363e;box-sizing:border-box;border-radius:4.5px;"></div>
<div class="a" style="left:795.3px;top:278px;width:15.5px;height:16.5px;background:#575757;border:1px solid #30363e;box-sizing:border-box;border-radius:4.5px;"></div>
<div class="a" style="left:964.3px;top:278px;width:15.5px;height:16.5px;background:#575757;border:1px solid #30363e;box-sizing:border-box;border-radius:4.5px;"></div>
<div class="a t" style="left:211.0px;top:294.0px;font-size:11px;line-height:16px;color:#f0f0f0;letter-spacing:-0.23px;">Top Layer-POS3_3V 6</div>
<div class="a t" style="left:353.0px;top:294.0px;font-size:11px;line-height:16px;color:#f0f0f0;letter-spacing:-0.11px;">16.541 sq.mm</div>
<div class="a t" style="left:439.0px;top:294.0px;font-size:11px;line-height:16px;color:#f0f0f0;letter-spacing:-0.68px;">POS3_3V</div>
<div class="a" style="left:617px;top:294px;width:15.5px;height:16.5px;background:#575757;border:1px solid #30363e;box-sizing:border-box;border-radius:4.5px;"></div>
<div class="a" style="left:704.3px;top:294px;width:15.5px;height:16.5px;background:#575757;border:1px solid #30363e;box-sizing:border-box;border-radius:4.5px;"></div>
<div class="a" style="left:795.3px;top:294px;width:15.5px;height:16.5px;background:#575757;border:1px solid #30363e;box-sizing:border-box;border-radius:4.5px;"></div>
<div class="a" style="left:964.3px;top:294px;width:15.5px;height:16.5px;background:#575757;border:1px solid #30363e;box-sizing:border-box;border-radius:4.5px;"></div>
<div class="a t" style="left:211.0px;top:310.0px;font-size:11px;line-height:16px;color:#f0f0f0;letter-spacing:-0.18px;">Top Layer-POS5V</div>
<div class="a t" style="left:353.0px;top:310.0px;font-size:11px;line-height:16px;color:#f0f0f0;letter-spacing:-0.11px;">15.416 sq.mm</div>
<div class="a t" style="left:439.0px;top:310.0px;font-size:11px;line-height:16px;color:#f0f0f0;letter-spacing:-0.64px;">POS5V</div>
<div class="a" style="left:617px;top:310px;width:15.5px;height:16.5px;background:#575757;border:1px solid #2c2c2c;box-sizing:border-box;border-radius:4.5px;"></div>
<div class="a" style="left:704.3px;top:310px;width:15.5px;height:16.5px;background:#575757;border:1px solid #2c2c2c;box-sizing:border-box;border-radius:4.5px;"></div>
<div class="a" style="left:795.3px;top:310px;width:15.5px;height:16.5px;background:#575757;border:1px solid #2c2c2c;box-sizing:border-box;border-radius:4.5px;"></div>
<div class="a" style="left:964.3px;top:310px;width:15.5px;height:16.5px;background:#575757;border:1px solid #2c2c2c;box-sizing:border-box;border-radius:4.5px;"></div>
<div class="a t" style="left:211.0px;top:326.0px;font-size:11px;line-height:16px;color:#f0f0f0;letter-spacing:-0.17px;">Top Layer-POS5V 1</div>
<div class="a t" style="left:353.0px;top:326.0px;font-size:11px;line-height:16px;color:#f0f0f0;letter-spacing:-0.11px;">24.149 sq.mm</div>
<div class="a t" style="left:439.0px;top:326.0px;font-size:11px;line-height:16px;color:#f0f0f0;letter-spacing:-0.64px;">POS5V</div>
<div class="a" style="left:617px;top:326px;width:15.5px;height:16.5px;background:#575757;border:1px solid #2c2c2c;box-sizing:border-box;border-radius:4.5px;"></div>
<div class="a" style="left:704.3px;top:326px;width:15.5px;height:16.5px;background:#575757;border:1px solid #2c2c2c;box-sizing:border-box;border-radius:4.5px;"></div>
<div class="a" style="left:795.3px;top:326px;width:15.5px;height:16.5px;background:#575757;border:1px solid #2c2c2c;box-sizing:border-box;border-radius:4.5px;"></div>
<div class="a" style="left:964.3px;top:326px;width:15.5px;height:16.5px;background:#575757;border:1px solid #2c2c2c;box-sizing:border-box;border-radius:4.5px;"></div>
<div class="a t" style="left:211.0px;top:342.0px;font-size:11px;line-height:16px;color:#f0f0f0;letter-spacing:-0.19px;">Top Layer-PWR_IN</div>
<div class="a t" style="left:353.0px;top:342.0px;font-size:11px;line-height:16px;color:#f0f0f0;letter-spacing:-0.11px;">46.898 sq.mm</div>
<div class="a t" style="left:439.0px;top:342.0px;font-size:11px;line-height:16px;color:#f0f0f0;letter-spacing:-0.59px;">PWR_IN</div>
<div class="a" style="left:617px;top:342px;width:15.5px;height:16.5px;background:#575757;border:1px solid #2c2c2c;box-sizing:border-box;border-radius:4.5px;"></div>
<div class="a" style="left:704.3px;top:342px;width:15.5px;height:16.5px;background:#575757;border:1px solid #2c2c2c;box-sizing:border-box;border-radius:4.5px;"></div>
<div class="a" style="left:795.3px;top:342px;width:15.5px;height:16.5px;background:#575757;border:1px solid #2c2c2c;box-sizing:border-box;border-radius:4.5px;"></div>
<div class="a" style="left:964.3px;top:342px;width:15.5px;height:16.5px;background:#575757;border:1px solid #2c2c2c;box-sizing:border-box;border-radius:4.5px;"></div>
<div class="a t" style="left:211.0px;top:358.0px;font-size:11px;line-height:16px;color:#f0f0f0;letter-spacing:-0.24px;">Top Layer-VCC1_8V</div>
<div class="a t" style="left:353.0px;top:358.0px;font-size:11px;line-height:16px;color:#f0f0f0;letter-spacing:-0.11px;">5.509 sq.mm</div>
<div class="a t" style="left:439.0px;top:358.0px;font-size:11px;line-height:16px;color:#f0f0f0;letter-spacing:-0.66px;">VCC1_8V</div>
<div class="a" style="left:617px;top:358px;width:15.5px;height:16.5px;background:#575757;border:1px solid #2c2c2c;box-sizing:border-box;border-radius:4.5px;"></div>
<div class="a" style="left:704.3px;top:358px;width:15.5px;height:16.5px;background:#575757;border:1px solid #2c2c2c;box-sizing:border-box;border-radius:4.5px;"></div>
<div class="a" style="left:795.3px;top:358px;width:15.5px;height:16.5px;background:#575757;border:1px solid #2c2c2c;box-sizing:border-box;border-radius:4.5px;"></div>
<div class="a" style="left:964.3px;top:358px;width:15.5px;height:16.5px;background:#575757;border:1px solid #2c2c2c;box-sizing:border-box;border-radius:4.5px;"></div>
<div class="a" style="left:617px;top:374px;width:15.5px;height:2px;background:#575757;border:1px solid #2c2c2c;box-sizing:border-box;border-bottom:none;border-radius:4px 4px 0 0;"></div>
<div class="a" style="left:704.3px;top:374px;width:15.5px;height:2px;background:#575757;border:1px solid #2c2c2c;box-sizing:border-box;border-bottom:none;border-radius:4px 4px 0 0;"></div>
<div class="a" style="left:795.3px;top:374px;width:15.5px;height:2px;background:#575757;border:1px solid #2c2c2c;box-sizing:border-box;border-bottom:none;border-radius:4px 4px 0 0;"></div>
<div class="a" style="left:964.3px;top:374px;width:15.5px;height:2px;background:#575757;border:1px solid #2c2c2c;box-sizing:border-box;border-bottom:none;border-radius:4px 4px 0 0;"></div>
<div class="a" style="left:351px;top:294px;width:86px;height:16px;border:1px dotted #7f9cc0;box-sizing:border-box;"></div>
<svg style="left:1095px;top:111px" width="8" height="4" viewBox="0 0 8 4"><path d="M0 4 H8 L4 0 Z" fill="#8a8a8a"/></svg>
<svg style="left:1095px;top:367px" width="8" height="4" viewBox="0 0 8 4"><path d="M0 0 H8 L4 4 Z" fill="#8a8a8a"/></svg>
<div class="a" style="left:1096px;top:128px;width:6px;height:39px;background:#6e6e6e;border-radius:3px;"></div>
<div class="a" style="left:200px;top:386px;width:80px;height:24px;border:1px solid #2c2c2c;box-sizing:border-box;border-radius:4px;background:linear-gradient(#5a5a5a,#4e4e4e);"></div>
<div class="a t" style="left:216.6px;top:390.0px;font-size:11px;line-height:16px;color:#f0f0f0;letter-spacing:0.26px;">Repour...</div>
<div class="a" style="left:288px;top:386px;width:80px;height:24px;border:1px solid #2c2c2c;box-sizing:border-box;border-radius:4px;background:linear-gradient(#5a5a5a,#4e4e4e);"></div>
<div class="a t" style="left:301.6px;top:390.0px;font-size:11px;line-height:16px;color:#f0f0f0;letter-spacing:0.15px;">Shelving...</div>
<div class="a" style="left:376px;top:386px;width:80px;height:24px;border:1px solid #2c2c2c;box-sizing:border-box;border-radius:4px;background:linear-gradient(#5a5a5a,#4e4e4e);"></div>
<div class="a t" style="left:391.1px;top:390.0px;font-size:11px;line-height:16px;color:#f0f0f0;letter-spacing:0.29px;">Locking...</div>
<div class="a" style="left:464px;top:386px;width:80px;height:24px;border:1px solid #2c2c2c;box-sizing:border-box;border-radius:4px;background:linear-gradient(#5a5a5a,#4e4e4e);"></div>
<div class="a t" style="left:474.1px;top:390.0px;font-size:11px;line-height:16px;color:#f0f0f0;letter-spacing:0.26px;">Violations...</div>
<div class="a" style="left:552px;top:386px;width:130px;height:24px;border:1px solid #2c2c2c;box-sizing:border-box;border-radius:4px;background:linear-gradient(#5a5a5a,#4e4e4e);"></div>
<div class="a t" style="left:561.5px;top:390.0px;font-size:11px;line-height:16px;color:#f0f0f0;letter-spacing:0.04px;">New Clearance Rule...</div>
<div class="a" style="left:690px;top:386px;width:129px;height:24px;border:1px solid #2c2c2c;box-sizing:border-box;border-radius:4px;background:linear-gradient(#5a5a5a,#4e4e4e);"></div>
<div class="a t" style="left:701.6px;top:390.0px;font-size:11px;line-height:16px;color:#f0f0f0;letter-spacing:0.16px;">New Connect Style...</div>
<div class="a" style="left:828px;top:386px;width:130px;height:24px;border:1px solid #2c2c2c;box-sizing:border-box;border-radius:4px;background:linear-gradient(#5a5a5a,#4e4e4e);"></div>
<div class="a t" style="left:840.0px;top:390.0px;font-size:11px;line-height:16px;color:#f0f0f0;letter-spacing:0.07px;">New Polygon Class...</div>
<div class="a" style="left:966px;top:386px;width:130px;height:24px;border:1px solid #2c2c2c;box-sizing:border-box;border-radius:4px;background:linear-gradient(#5a5a5a,#4e4e4e);"></div>
<div class="a t" style="left:978.2px;top:390.0px;font-size:11px;line-height:16px;color:#f0f0f0;letter-spacing:0.37px;">New Polygon from...</div>
<div class="a" style="left:191.5px;top:426px;width:289.5px;height:329.5px;background:#474747;"></div>
<div class="a" style="left:192px;top:426.5px;width:281px;height:254.5px;background:#3a3a3a;border:1px solid #2c2c2c;box-sizing:border-box;"></div>
<div class="a" style="left:193px;top:427.5px;width:265px;height:24.5px;background:#4f4f4f;"></div>
<div class="a" style="left:193px;top:452px;width:265px;height:1px;background:#2c2c2c;"></div>
<div class="a t" style="left:195.0px;top:433.0px;font-size:16px;line-height:16px;color:#f0f0f0;letter-spacing:-0.15px;font-weight:bold;">Pour Order</div>
<div class="a" style="left:193px;top:661px;width:265px;height:16px;background:#555555;"></div>
<div class="a t" style="left:195.0px;top:453.0px;font-size:11px;line-height:16px;color:#f0f0f0;letter-spacing:-0.16px;">Top Layer-VDDA_B 2</div>
<div class="a" style="left:399px;top:454px;width:58px;height:14px;background:#ff0000;"></div>
<div class="a t" style="left:195.0px;top:469.0px;font-size:11px;line-height:16px;color:#f0f0f0;letter-spacing:-0.16px;">Top Layer-VDDA_B 1</div>
<div class="a" style="left:399px;top:470px;width:58px;height:14px;background:#ff0000;"></div>
<div class="a t" style="left:195.0px;top:485.0px;font-size:11px;line-height:16px;color:#f0f0f0;letter-spacing:-0.22px;">Top Layer-VCC3_3V 7</div>
<div class="a" style="left:399px;top:486px;width:58px;height:14px;background:#ff0000;"></div>
<div class="a t" style="left:195.0px;top:501.0px;font-size:11px;line-height:16px;color:#f0f0f0;letter-spacing:-0.08px;">Top Layer-VDDD_A 5</div>
<div class="a" style="left:399px;top:502px;width:58px;height:14px;background:#ff0000;"></div>
<div class="a t" style="left:195.0px;top:517.0px;font-size:11px;line-height:16px;color:#f0f0f0;letter-spacing:-0.18px;">Top Layer-POS5V</div>
<div class="a" style="left:399px;top:518px;width:58px;height:14px;background:#ff0000;"></div>
<div class="a t" style="left:195.0px;top:533.0px;font-size:11px;line-height:16px;color:#f0f0f0;letter-spacing:-0.22px;">Top Layer-VCC3_3V 14</div>
<div class="a" style="left:399px;top:534px;width:58px;height:14px;background:#ff0000;"></div>
<div class="a t" style="left:195.0px;top:549.0px;font-size:11px;line-height:16px;color:#f0f0f0;letter-spacing:-0.23px;">Top Layer-POS1_8V 1</div>
<div class="a" style="left:399px;top:550px;width:58px;height:14px;background:#ff0000;"></div>
<div class="a t" style="left:195.0px;top:565.0px;font-size:11px;line-height:16px;color:#f0f0f0;letter-spacing:-0.22px;">Top Layer-VCC1_8V 1</div>
<div class="a" style="left:399px;top:566px;width:58px;height:14px;background:#ff0000;"></div>
<div class="a t" style="left:195.0px;top:581.0px;font-size:11px;line-height:16px;color:#f0f0f0;letter-spacing:-0.22px;">Top Layer-VDDA_E</div>
<div class="a" style="left:399px;top:582px;width:58px;height:14px;background:#ff0000;"></div>
<div class="a t" style="left:195.0px;top:597.0px;font-size:11px;line-height:16px;color:#f0f0f0;letter-spacing:-0.23px;">Top Layer-POS3_3V 4</div>
<div class="a" style="left:399px;top:598px;width:58px;height:14px;background:#ff0000;"></div>
<div class="a t" style="left:195.0px;top:613.0px;font-size:11px;line-height:16px;color:#f0f0f0;letter-spacing:-0.20px;">Top Layer-VDDA_E 2</div>
<div class="a" style="left:399px;top:614px;width:58px;height:14px;background:#ff0000;"></div>
<div class="a t" style="left:195.0px;top:629.0px;font-size:11px;line-height:16px;color:#f0f0f0;letter-spacing:-0.22px;">Top Layer-VCC3_3V 1</div>
<div class="a" style="left:399px;top:630px;width:58px;height:14px;background:#ff0000;"></div>
<div class="a t" style="left:195.0px;top:645.0px;font-size:11px;line-height:16px;color:#f0f0f0;letter-spacing:-0.22px;">Top Layer-VCC3_3V 2</div>
<div class="a" style="left:399px;top:646px;width:58px;height:14px;background:#ff0000;"></div>
<div class="a t" style="left:195.0px;top:661.0px;font-size:11px;line-height:16px;color:#f0f0f0;letter-spacing:-0.23px;">Top Layer-POS3_3V 6</div>
<div class="a" style="left:399px;top:662px;width:58px;height:15px;background:#ff0000;"></div>
<div class="a" style="left:399px;top:678px;width:58px;height:2px;background:#ff0000;"></div>
<div class="a" style="left:458px;top:428px;width:1px;height:252px;background:#2c2c2c;"></div>
<svg style="left:461px;top:432px" width="8" height="4" viewBox="0 0 8 4"><path d="M0 4 H8 L4 0 Z" fill="#8a8a8a"/></svg>
<svg style="left:461px;top:671px" width="8" height="4" viewBox="0 0 8 4"><path d="M0 0 H8 L4 4 Z" fill="#8a8a8a"/></svg>
<div class="a" style="left:462px;top:536px;width:6px;height:44px;background:#707070;border-radius:3px;"></div>
<div class="a" style="left:200px;top:690px;width:75px;height:24px;border:1px solid #2c2c2c;box-sizing:border-box;border-radius:4px;background:linear-gradient(#5a5a5a,#4e4e4e);"></div>
<div class="a t" style="left:215.1px;top:694.0px;font-size:11px;line-height:16px;color:#f0f0f0;letter-spacing:0.14px;">Move Up</div>
<div class="a" style="left:283px;top:690px;width:75px;height:24px;border:1px solid #2c2c2c;box-sizing:border-box;border-radius:4px;background:linear-gradient(#5a5a5a,#4e4e4e);"></div>
<div class="a t" style="left:290.2px;top:694.0px;font-size:11px;line-height:16px;color:#f0f0f0;letter-spacing:0.32px;">Move Down</div>
<div class="a" style="left:366px;top:690px;width:98px;height:24px;border:1px solid #2c2c2c;box-sizing:border-box;border-radius:4px;background:linear-gradient(#5a5a5a,#4e4e4e);"></div>
<div class="a t" style="left:378.1px;top:694.0px;font-size:11px;line-height:16px;color:#f0f0f0;letter-spacing:0.19px;">Auto Generate</div>
<div class="a" style="left:200px;top:722.5px;width:265px;height:24px;border:1px solid #2c2c2c;box-sizing:border-box;border-radius:4px;background:linear-gradient(#5a5a5a,#4e4e4e);"></div>
<div class="a t" style="left:281.6px;top:726.5px;font-size:11px;line-height:16px;color:#f0f0f0;letter-spacing:0.23px;">Animate Pour Order</div>
<div class="a" style="left:481px;top:426px;width:626px;height:329px;background:#6c6b6a;"></div>
<div class="a" style="left:480px;top:426px;width:1px;height:329px;background:#3a3a3a;"></div>
<div class="a" style="left:481px;top:755px;width:626px;height:1px;background:#3a3a3a;"></div>
<div class="a" style="left:647px;top:443px;width:295px;height:296px;background:#000;"></div>
<svg style="left:686px;top:612px" width="14" height="22" viewBox="0 0 14 22"><path d="M2 5 L7 1 L12 5 L9 9 H6 V14 H2 Z M2 15 H7 V16 H5 V19 H8 V20 H4 V17 H2Z" fill="#f00"/></svg>
<svg style="left:846px;top:630.500px" width="15" height="13" viewBox="0 0 15 13"><path d="M0.500 7 L7 0 L14 7 Z" fill="#f00"/><path d="M1 8.500 H14 M3 11 H14 M6.500 7 V12.500 M12.500 7 V12.500" stroke="#f00" stroke-width="1" fill="none"/></svg>
<svg style="left:860px;top:668px" width="10" height="19" viewBox="0 0 10 19"><path d="M3.500 0 V10 M8 1 V10 M3.500 2.500 H8.500 M3.500 5 H8.500 M3.500 7.500 H8.500" stroke="#f00" stroke-width="1.100" fill="none"/><path d="M3 9 H9 V17.500 H5 Q1 17 1 13.500 Q1 10.500 3 9 Z" fill="#f00"/></svg>
<svg style="left:685px;top:702px" width="11" height="18" viewBox="0 0 11 18"><path d="M2 2 Q5 0 9 1 V16 H8 V13 H5 V15 H2 Z" fill="#f00"/><path d="M4 6 H7 M4 9 H7 M4 12 H7" stroke="#000" stroke-width="1"/></svg>
<svg style="left:852px;top:717px" width="17" height="12" viewBox="0 0 17 12"><path d="M1 6 H5 V4 H6 V6 H9 V3 H10 V6 H12 V2 H16 V11 H1 Z" fill="#f00"/></svg>
<div class="a" style="left:720px;top:485px;width:385px;height:129px;background:#4f4f4f;border:1px solid #333333;box-sizing:border-box;"></div>
<div class="a t" style="left:839.9px;top:493.0px;font-size:12px;line-height:16px;color:#f0f0f0;letter-spacing:-0.20px;">Object Class Name</div>
<div class="a" style="left:1061px;top:486px;width:36px;height:22px;background:#a00000;"></div>
<svg style="left:1074px;top:492px" width="10" height="10" viewBox="0 0 10 10"><path d="M1.200 1.200 L8.800 8.800 M8.800 1.200 L1.200 8.800" stroke="#fff" stroke-width="2.200"/></svg>
<div class="a" style="left:728px;top:516px;width:369px;height:57px;background:#464646;border:1px solid #3a3a3a;box-sizing:border-box;"></div>
<div class="a t" style="left:744.0px;top:534.0px;font-size:11px;line-height:16px;color:#e8e8e8;letter-spacing:-0.19px;">Class Name</div>
<div class="a" style="left:816px;top:532px;width:265.5px;height:21px;background:#303030;border:1px solid #a8c8ea;box-sizing:border-box;border-radius:4px;"></div>
<div class="a t" style="left:825.0px;top:534.0px;font-size:11px;line-height:16px;color:#f0f0f0;letter-spacing:-0.43px;">3_3V</div>
<div class="a" style="left:850px;top:535px;width:1px;height:14px;background:#f0f0f0;"></div>
<div class="a" style="left:939px;top:580px;width:75px;height:25px;border:1px solid #a8c8ea;box-sizing:border-box;border-radius:4px;background:linear-gradient(#5a5a5a,#4e4e4e);"></div>
<div class="a t" style="left:968.8px;top:584.5px;font-size:11px;line-height:16px;color:#f4f4f4;letter-spacing:-0.45px;">OK</div>
<div class="a" style="left:1022px;top:580px;width:75px;height:25px;border:1px solid #2c2c2c;box-sizing:border-box;border-radius:4px;background:linear-gradient(#5a5a5a,#4e4e4e);"></div>
<div class="a t" style="left:1042.9px;top:584.5px;font-size:11px;line-height:16px;color:#f4f4f4;letter-spacing:-0.21px;">Cancel</div>
<div class="a" style="left:1107px;top:105px;width:329px;height:651px;background:#404040;"></div>
<div class="a" style="left:1107px;top:105px;width:1px;height:651px;background:#353535;"></div>
<div class="a" style="left:1123px;top:109px;width:304px;height:20px;background:#323232;border:1px solid #2a2a2a;box-sizing:border-box;border-radius:4px;"></div>
<svg style="left:1131px;top:113px" width="12" height="12" viewBox="0 0 12 12"><circle cx="4.800" cy="4.800" r="3.500" fill="none" stroke="#a4a4a4" stroke-width="1.800"/><path d="M7.500 7.500 L11 11" stroke="#a4a4a4" stroke-width="2"/></svg>
<div class="a t" style="left:1150.0px;top:111.0px;font-size:11px;line-height:16px;color:#e0e0e0;letter-spacing:-0.31px;">Search</div>
<svg style="left:1124px;top:150px" width="5.500" height="5.500" viewBox="0 0 6 6"><path d="M6 0 V6 H0 Z" fill="#d8d8d8"/></svg>
<div class="a t" style="left:1134.0px;top:145.0px;font-size:11px;line-height:16px;color:#f0f0f0;letter-spacing:0.11px;font-weight:bold;">Net Information</div>
<div class="a" style="left:1123px;top:166px;width:296px;height:54px;background:#484848;border-radius:4px;"></div>
<div class="a t" style="left:1239.0px;top:173.0px;font-size:11px;line-height:16px;color:#9a9a9a;letter-spacing:-0.09px;">Name</div>
<div class="a t" style="left:1326.0px;top:173.0px;font-size:11px;line-height:16px;color:#9a9a9a;letter-spacing:-0.30px;">Class</div>
<div class="a t" style="left:1209.3px;top:194.0px;font-size:11px;line-height:16px;color:#e0e0e0;letter-spacing:0.29px;">Net</div>
<div class="a t" style="left:1239.0px;top:194.0px;font-size:11px;line-height:16px;color:#8fb4e0;letter-spacing:-0.56px;">POS3_3V</div>
<div class="a t" style="left:1326.0px;top:194.0px;font-size:11px;line-height:16px;color:#8fb4e0;letter-spacing:0.16px;">Power</div>
<svg style="left:1124px;top:239px" width="5.500" height="5.500" viewBox="0 0 6 6"><path d="M6 0 V6 H0 Z" fill="#d8d8d8"/></svg>
<div class="a t" style="left:1134.0px;top:234.0px;font-size:11px;line-height:16px;color:#f0f0f0;letter-spacing:-0.24px;font-weight:bold;">Properties</div>
<div class="a" style="left:1123px;top:255px;width:296px;height:487px;background:#484848;border-radius:4px 4px 0 0;"></div>
<div class="a t" style="left:1209.3px;top:266.0px;font-size:11px;line-height:16px;color:#8fb4e0;letter-spacing:0.29px;">Net</div>
<div class="a" style="left:1239px;top:263px;width:174px;height:21px;background:#2e2e2e;border:1px solid #262626;box-sizing:border-box;border-radius:4px;"></div>
<div class="a t" style="left:1243.0px;top:266.0px;font-size:11px;line-height:16px;color:#f0f0f0;letter-spacing:-0.56px;">POS3_3V</div>
<svg style="left:1399px;top:272px" width="9" height="5" viewBox="0 0 9 5"><path d="M0 0 H9 L4.500 5 Z" fill="#f0f0f0"/></svg>
<div class="a t" style="left:1200.7px;top:291.0px;font-size:11px;line-height:16px;color:#e0e0e0;letter-spacing:-0.31px;">Layer</div>
<div class="a" style="left:1239px;top:288px;width:174px;height:21px;border:1px solid #2c2c2c;box-sizing:border-box;border-radius:4px;background:linear-gradient(#626262,#525252);"></div>
<div class="a" style="left:1240px;top:289px;width:8px;height:19px;background:#ff0000;border-radius:3px 0 0 3px;"></div>
<div class="a t" style="left:1255.0px;top:291.0px;font-size:11px;line-height:16px;color:#f0f0f0;letter-spacing:-0.15px;">Top Layer</div>
<svg style="left:1399px;top:297px" width="9" height="5" viewBox="0 0 9 5"><path d="M0 0 H9 L4.500 5 Z" fill="#f0f0f0"/></svg>
<div class="a t" style="left:1197.9px;top:316.0px;font-size:11px;line-height:16px;color:#e0e0e0;letter-spacing:-0.09px;">Name</div>
<div class="a" style="left:1239px;top:313px;width:174px;height:20px;background:#2e2e2e;border:1px solid #262626;box-sizing:border-box;border-radius:4px;"></div>
<div class="a t" style="left:1247.0px;top:318.0px;font-size:12px;line-height:16px;color:#e8cc80;letter-spacing:0.33px;">*</div>
<div class="a" style="left:1390px;top:321px;width:3px;height:3px;background:#f0f0f0;border-radius:2px;"></div>
<div class="a" style="left:1395px;top:321px;width:3px;height:3px;background:#f0f0f0;border-radius:2px;"></div>
<div class="a" style="left:1400px;top:321px;width:3px;height:3px;background:#f0f0f0;border-radius:2px;"></div>
<div class="a t" style="left:1203.9px;top:338.0px;font-size:11px;line-height:16px;color:#e0e0e0;letter-spacing:-0.06px;">Area</div>
<div class="a t" style="left:1239.0px;top:338.0px;font-size:11px;line-height:16px;color:#f0f0f0;letter-spacing:-0.06px;">17.465 sq.mm</div>
<div class="a" style="left:1129px;top:361px;width:284px;height:1px;background:#303030;"></div>
<div class="a t" style="left:1205.2px;top:375.0px;font-size:11px;line-height:16px;color:#e0e0e0;letter-spacing:-0.81px;">(X/Y)</div>
<div class="a" style="left:1239px;top:373px;width:73px;height:20px;background:#2e2e2e;border:1px solid #262626;box-sizing:border-box;border-radius:4px;"></div>
<div class="a t" style="left:1247.0px;top:377.0px;font-size:12px;line-height:16px;color:#e8cc80;letter-spacing:0.33px;">*</div>
<div class="a" style="left:1316px;top:373px;width:67px;height:20px;background:#2e2e2e;border:1px solid #262626;box-sizing:border-box;border-radius:4px;"></div>
<div class="a t" style="left:1324.0px;top:377.0px;font-size:12px;line-height:16px;color:#e8cc80;letter-spacing:0.33px;">*</div>
<div class="a" style="left:1389px;top:370px;width:24px;height:25px;border:1px solid #2c2c2c;box-sizing:border-box;border-radius:4px;background:linear-gradient(#5a5a5a,#4e4e4e);"></div>
<svg style="left:1395px;top:374px" width="12" height="16" viewBox="0 0 12 16"><path d="M3 7 V4.500 A3 3 0 0 1 9 4.500 V5.500" fill="none" stroke="#f4f4f4" stroke-width="1.800"/><rect x="0.500" y="7" width="11" height="8.500" rx="1.500" fill="#f4f4f4"/><circle cx="6" cy="11.200" r="1.500" fill="#555"/></svg>
<div class="a" style="left:1129px;top:403px;width:284px;height:1px;background:#303030;"></div>
<div class="a" style="left:1129px;top:411.5px;width:284px;height:22px;border:1px solid #2c2c2c;box-sizing:border-box;border-radius:4px;background:linear-gradient(#505050,#464646);"></div>
<div class="a" style="left:1130px;top:412.5px;width:94px;height:20px;background:#6085ae;border-radius:3px 0 0 3px;"></div>
<div class="a" style="left:1224px;top:412.5px;width:1px;height:20px;background:#2c2c2c;"></div>
<div class="a" style="left:1318px;top:412.5px;width:1px;height:20px;background:#2c2c2c;"></div>
<div class="a t" style="left:1164.6px;top:415.0px;font-size:11px;line-height:16px;color:#f4f4f4;letter-spacing:0.11px;">Solid</div>
<div class="a t" style="left:1250.1px;top:415.0px;font-size:11px;line-height:16px;color:#f0f0f0;letter-spacing:0.29px;">Hatched</div>
<div class="a t" style="left:1352.2px;top:415.0px;font-size:11px;line-height:16px;color:#f0f0f0;letter-spacing:0.43px;">None</div>
<div class="a" style="left:1129px;top:444px;width:284px;height:298px;background:#3c3c3c;border-radius:4px 4px 0 0;"></div>
<div class="a t" style="left:1139.5px;top:449.0px;font-size:11px;line-height:16px;color:#7fa8d8;letter-spacing:0.20px;">Hide preview</div>
<div class="a" style="left:1139px;top:465px;width:67px;height:1px;border-top:1px dashed #7fa8d8;"></div>
<div class="a" style="left:1145px;top:487px;width:15px;height:15px;background:#555555;border:1px solid #2c2c2c;box-sizing:border-box;border-radius:3px;"></div>
<svg style="left:1148px;top:491px" width="9" height="7" viewBox="0 0 9 7"><path d="M0.800 3 L3.400 5.800 L8.200 0.800" fill="none" stroke="#e8e8e8" stroke-width="1.400"/></svg>
<div class="a t" style="left:1165.0px;top:487.0px;font-size:11px;line-height:16px;color:#f0f0f0;letter-spacing:-0.11px;">Remove Islands Less Than</div>
<div class="a" style="left:1308px;top:483px;width:90px;height:20px;background:#2e2e2e;border:1px solid #262626;box-sizing:border-box;border-radius:4px;"></div>
<div class="a t" style="left:1314.0px;top:485.0px;font-size:11px;line-height:16px;color:#f0f0f0;letter-spacing:-0.10px;">2 sq.mm</div>
<div class="a t" style="left:1234.0px;top:522.0px;font-size:11px;line-height:16px;color:#f0f0f0;letter-spacing:0.15px;">Arc Approx.</div>
<div class="a" style="left:1306px;top:520px;width:90px;height:20px;background:#2e2e2e;border:1px solid #262626;box-sizing:border-box;border-radius:4px;"></div>
<div class="a t" style="left:1312.0px;top:522.0px;font-size:11px;line-height:16px;color:#f0f0f0;letter-spacing:-0.12px;">0.013mm</div>
<svg style="left:1190px;top:505px" width="165" height="200" viewBox="1190 505 165 200">
<rect x="1243.300" y="556" width="104" height="103.600" rx="5" fill="#dcb84c"/>
<path d="M1227.500 558 V568 L1198 598 V673" fill="none" stroke="#dcb84c" stroke-width="5" stroke-linecap="round" stroke-linejoin="round"/>
<path d="M1236.900 558 V660" stroke="#dcb84c" stroke-width="5.600" stroke-linecap="round"/>
<rect x="1230" y="663" width="9.800" height="29" rx="4.500" fill="#dcb84c"/>
<path d="M1204 674 V626 Q1204 620 1209 620 Q1217 625 1226 620 Q1230.600 620 1230.600 626 V658 Q1226.500 662 1226 674 Z" fill="#dcb84c"/>
<circle cx="1217" cy="611.300" r="7.600" fill="none" stroke="#dcb84c" stroke-width="4.200"/>
<path d="M1229.500 576 Q1231.500 588 1230.500 600 Q1218 596 1206.500 600 Z" fill="#3c3c3c" stroke="#fff" stroke-width="1.700" stroke-linejoin="round"/>
<circle cx="1280.600" cy="607.300" r="24" fill="none" stroke="#fff" stroke-width="1.400"/>
<path d="M1301.2 615.8 L1289.1 627.9 L1272.1 627.9 L1260.0 615.8 L1260.0 598.8 L1272.1 586.7 L1289.1 586.7 L1301.2 598.8 Z" fill="#3c3c3c"/>
<circle cx="1280.600" cy="607.300" r="18.300" fill="none" stroke="#fff" stroke-width="1.400"/>
<circle cx="1280.600" cy="607.300" r="11.800" fill="none" stroke="#dcb84c" stroke-width="7.400"/>
<path d="M1220.200 511 V591 M1217.700 588 L1220.200 592 L1222.700 588" fill="none" stroke="#e8e8e8" stroke-width="1"/>
<path d="M1280.600 544 V582 M1278 579 L1280.600 583 L1283.200 579 M1280.600 602 V592 M1278 594.500 L1280.600 591 L1283.200 594.500" fill="none" stroke="#e8e8e8" stroke-width="1"/>
<rect x="1250.6" y="664" width="7.400" height="27.500" rx="3.700" fill="#dcb84c"/><rect x="1271.3" y="664" width="7.400" height="27.500" rx="3.700" fill="#dcb84c"/><rect x="1292.0" y="664" width="7.400" height="27.500" rx="3.700" fill="#dcb84c"/><rect x="1312.7" y="664" width="7.400" height="27.500" rx="3.700" fill="#dcb84c"/><rect x="1334.2" y="664" width="7.400" height="27.500" rx="3.700" fill="#dcb84c"/>
<rect x="1240.500" y="660.500" width="106.400" height="17" fill="none" stroke="#fff" stroke-width="1"/>
<path d="M1264.500 702 V679 M1262 681.500 L1264.500 678 L1267 681.500" fill="none" stroke="#e8e8e8" stroke-width="1"/>
</svg>
<div class="a t" style="left:1126.3px;top:710.0px;font-size:11px;line-height:16px;color:#f0f0f0;letter-spacing:-0.22px;clip-path:inset(0 0 0 2px);">Remove Necks Less Than</div>
<div class="a" style="left:1259px;top:708px;width:85px;height:19px;background:#2e2e2e;border:1px solid #262626;box-sizing:border-box;border-radius:4px;"></div>
<div class="a t" style="left:1265.0px;top:709.5px;font-size:11px;line-height:16px;color:#f0f0f0;letter-spacing:-0.12px;">0.127mm</div>
<div class="a" style="left:1352px;top:710px;width:15px;height:15px;background:#555555;border:1px solid #2c2c2c;box-sizing:border-box;border-radius:3px;"></div>
<div class="a" style="left:1372.500px;top:710px;width:40.500px;height:16px;overflow:hidden;"><div class="t" style="font-size:11px;line-height:16px;color:#f0f0f0;letter-spacing:0.1px;">Obey Rules</div></div>
<div class="a" style="left:1129px;top:737px;width:278px;height:1px;background:#2c2c2c;"></div>
<div class="a" style="left:1107px;top:742px;width:329px;height:14px;background:#404040;"></div>
<svg style="left:1423px;top:139px" width="7" height="3.500" viewBox="0 0 9 4"><path d="M0 4 H9 L4.500 0 Z" fill="#8a8a8a"/></svg>
<svg style="left:1423px;top:731.500px" width="7" height="3.500" viewBox="0 0 9 4"><path d="M0 0 H9 L4.500 4 Z" fill="#8a8a8a"/></svg>
<div class="a" style="left:1423px;top:150px;width:6px;height:488px;background:#8c8c8c;border-radius:3px;"></div>
<div class="a t" style="left:1118.5px;top:741.0px;font-size:11px;line-height:16px;color:#e8e8e8;letter-spacing:0.11px;">7 objects are selected</div>
<div class="a" style="left:1187px;top:764.5px;width:75px;height:24.5px;border:1px solid #a8c8ea;box-sizing:border-box;border-radius:4px;background:linear-gradient(#5a5a5a,#4e4e4e);"></div>
<div class="a t" style="left:1217.3px;top:769.0px;font-size:11px;line-height:16px;color:#f4f4f4;letter-spacing:-0.45px;">OK</div>
<div class="a" style="left:1270px;top:764.5px;width:75px;height:24.5px;border:1px solid #2c2c2c;box-sizing:border-box;border-radius:4px;background:linear-gradient(#5a5a5a,#4e4e4e);"></div>
<div class="a t" style="left:1290.2px;top:769.0px;font-size:11px;line-height:16px;color:#f4f4f4;letter-spacing:-0.12px;">Cancel</div>
<div class="a" style="left:1353px;top:764.5px;width:75px;height:24.5px;background:#4a4a4a;border:1px solid #3a3a3a;box-sizing:border-box;border-radius:4px;"></div>
<div class="a t" style="left:1376.1px;top:769.0px;font-size:11px;line-height:16px;color:#8a8a8a;letter-spacing:0.29px;">Apply</div>
<svg style="left:670px;top:60px" width="250" height="60" viewBox="670 60 250 60"><rect x="678.500" y="68.500" width="225" height="38" rx="6" fill="none" stroke="#08eef4" stroke-width="3"/></svg>
<svg style="left:795px;top:350px" width="200" height="150" viewBox="795 350 200 150"><ellipse cx="892.500" cy="400" rx="88.500" ry="39" fill="none" stroke="#08eef4" stroke-width="4.400"/><path d="M889.800 439 V478" stroke="#08eef4" stroke-width="4"/><path d="M879.500 474 H900.500 L890 493 Z" fill="#08eef4"/></svg>
<svg style="left:934px;top:403px" width="14" height="21" viewBox="0 0 14 21"><path d="M1 1 V16.500 L4.800 13 L7.600 19.300 L10 18.200 L7.300 12 H12.300 Z" fill="#fff" stroke="#000" stroke-width="1" stroke-linejoin="round"/></svg>
<svg style="left:999px;top:593px" width="14" height="21" viewBox="0 0 14 21"><path d="M1 1 V16.500 L4.800 13 L7.600 19.300 L10 18.200 L7.300 12 H12.300 Z" fill="#fff" stroke="#000" stroke-width="1" stroke-linejoin="round"/></svg>
</body></html>
